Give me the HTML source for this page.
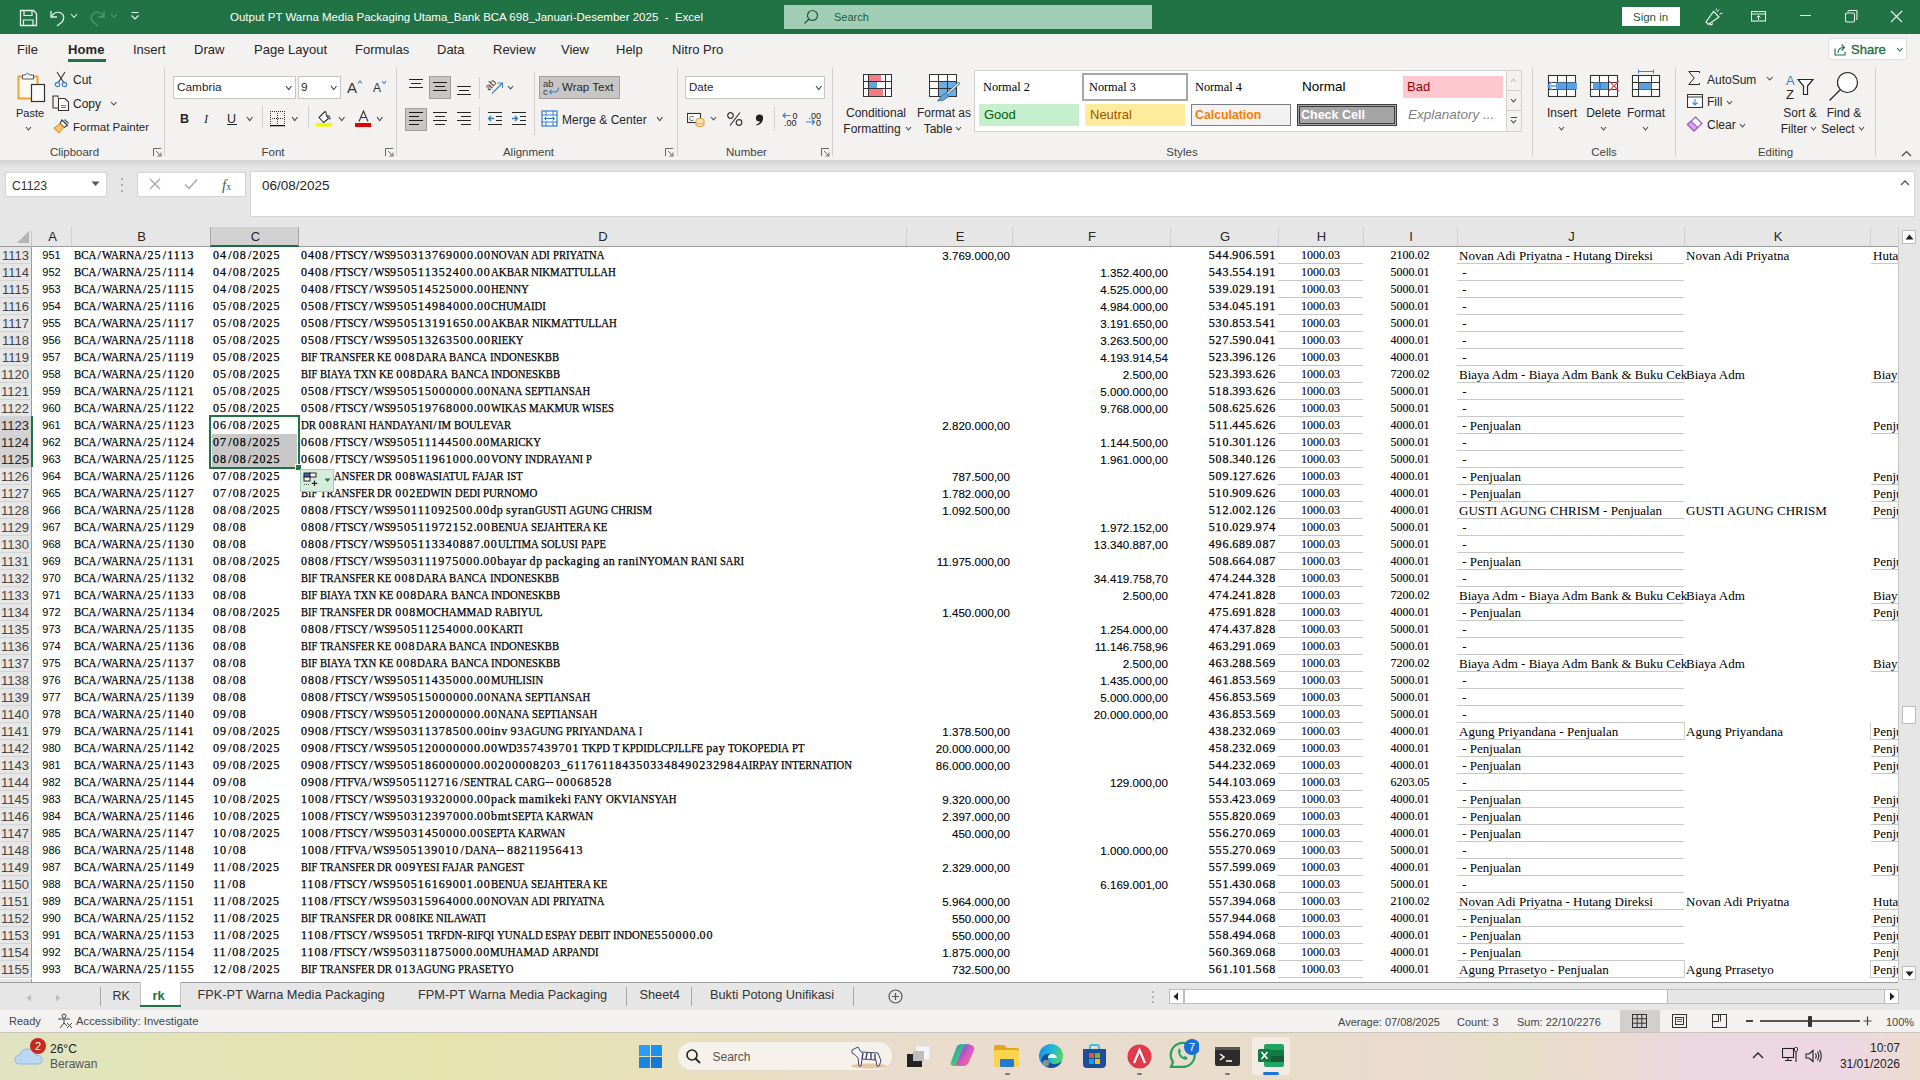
<!DOCTYPE html>
<html><head><meta charset="utf-8"><style>
*{box-sizing:border-box}
html,body{margin:0;padding:0}
body{width:1920px;height:1080px;overflow:hidden;position:relative;background:#fff;font-family:"Liberation Sans",sans-serif;color:#262626}
.a{position:absolute;white-space:nowrap}
#grid{position:absolute;left:0;top:247px;width:1898px;height:735px;background:#fff;overflow:hidden}
.ch{position:absolute;top:227px;height:19px;padding-left:1px;font-size:13px;line-height:20px;text-align:center;color:#262626;border-right:1px solid #d0d0d0}
.ch.sel{background:#d2d2d2;border-bottom:2px solid #1e6b3f;border-left:1px solid #a6a6a6;border-right:1px solid #a6a6a6;color:#262626;height:20px;padding-left:2px}
.rh{position:absolute;left:0;width:32px;height:17px;font-size:13px;line-height:17px;text-align:right;padding-right:2px;background:#e6e6e6;color:#444;border-bottom:1px solid #d4d4d4;border-right:1px solid #9b9b9b}
.rh.sel{background:#d2d2d2;color:#262626}
.c{position:absolute;height:17px;line-height:17px;white-space:nowrap;overflow:hidden;color:#000;font-size:12px}
.ca{left:32px;width:39px;text-align:center;font-family:"Liberation Sans";font-size:11px}
.cb{left:74px;width:136px;font-family:"Liberation Serif";font-size:12px}
.cc{left:213px;width:85px;font-family:"Liberation Serif";font-size:12px}
.cc.shade{background:#c8c8c8;left:212px;width:85px;padding-left:1px}
.cd{left:301px;width:605px;font-family:"Liberation Serif";font-size:12px}
.ce{left:906px;width:104px;text-align:right;font-family:"Liberation Sans";font-size:11.6px}
.cf{left:1012px;width:156px;text-align:right;font-family:"Liberation Sans";font-size:11.6px}
.cg{left:1170px;width:106px;text-align:right;font-family:"Liberation Serif";font-size:12px}
.chh{left:1278px;width:85px;text-align:center;font-family:"Liberation Serif";font-size:12px;border-bottom:1px solid #c8c8c8}
.ci{left:1363px;width:94px;text-align:center;font-family:"Liberation Serif";font-size:12px}
.cj{left:1459px;width:225px;overflow:visible;font-family:"Liberation Serif";font-size:13px}
.ck{left:1686px;width:184px;font-family:"Liberation Serif";font-size:13px}
.cl{left:1873px;width:25px;font-family:"Liberation Serif";font-size:13px}
i{font-style:normal}
.cb i.d,.cc i.d,.cd i.d{letter-spacing:1px}
.cg i.d{letter-spacing:0.8px}
.cb i.s,.cc i.s,.cd i.s{padding:0 1.2px}
.cb i.u,.cc i.u,.cd i.u{display:inline-block;transform-origin:0 0}
.cb i.l,.cc i.l,.cd i.l{letter-spacing:0.6px}
.cb i.p,.cc i.p,.cd i.p{letter-spacing:-0.3px}
.c{-webkit-text-stroke:0.25px #000}
.ca{-webkit-text-stroke:0}
.ce,.cf{-webkit-text-stroke:0.1px #000}
.cj,.ck,.cl{-webkit-text-stroke:0}
.chh,.ci{-webkit-text-stroke:0.1px #000}

</style></head><body>
<div class="a" style="left:0px;top:0px;width:1920px;height:34px;background:#217346"></div>
<svg class="a" style="left:19px;top:9px;" width="19" height="18" viewBox="0 0 19 18"><path d="M1.5 1.5 H14.5 L17.5 4.5 V16.5 H1.5 Z" fill="none" stroke="#e8f3ec" stroke-width="1.3"/><path d="M5 1.5 V6.5 H13 V1.5" fill="none" stroke="#e8f3ec" stroke-width="1.2"/><path d="M4.5 16.5 V11 H14 V16.5" fill="none" stroke="#e8f3ec" stroke-width="1.2"/></svg>
<svg class="a" style="left:49px;top:8px;" width="18" height="19" viewBox="0 0 18 19"><path d="M2 3 V9 H8" fill="none" stroke="#e8f3ec" stroke-width="1.3"/><path d="M2.5 8.5 C5 4.5 9 3.5 12 5 C15.5 7 15.5 11 13 14 L8 18" fill="none" stroke="#e8f3ec" stroke-width="1.3"/></svg>
<svg class="a" style="left:70px;top:13px;" width="8" height="5.5" viewBox="0 0 8 5.5"><path d="M1 1 L4.0 4.5 L7 1" fill="none" stroke="#e8f3ec" stroke-width="1.1"/></svg>
<svg class="a" style="left:88px;top:8px;" width="18" height="19" viewBox="0 0 18 19"><path d="M16 3 V9 H10" fill="none" stroke="#4f9a6e" stroke-width="1.3"/><path d="M15.5 8.5 C13 4.5 9 3.5 6 5 C2.5 7 2.5 11 5 14 L10 18" fill="none" stroke="#4f9a6e" stroke-width="1.3"/></svg>
<svg class="a" style="left:110px;top:13px;" width="8" height="5.5" viewBox="0 0 8 5.5"><path d="M1 1 L4.0 4.5 L7 1" fill="none" stroke="#4f9a6e" stroke-width="1.1"/></svg>
<svg class="a" style="left:130px;top:11px;" width="10" height="10" viewBox="0 0 10 10"><path d="M1.5 1.5 H8.5" stroke="#e8f3ec" stroke-width="1.1"/><path d="M1.5 4.5 L5 8 L8.5 4.5" fill="none" stroke="#e8f3ec" stroke-width="1.2"/></svg>
<div class="a" style="left:230px;top:12px;font:400 11.5px/11.5px 'Liberation Sans';color:#ffffff;">Output PT Warna Media Packaging Utama_Bank BCA 698_Januari-Desember 2025&nbsp; -&nbsp; Excel</div>
<div class="a" style="left:784px;top:5px;width:368px;height:24px;background:#a0cdb3"></div>
<svg class="a" style="left:803px;top:9px;" width="16" height="16" viewBox="0 0 16 16"><circle cx="9.5" cy="6.5" r="5" fill="none" stroke="#1f5d3b" stroke-width="1.2"/><path d="M6 10 L1.5 14.5" stroke="#1f5d3b" stroke-width="1.3"/></svg>
<div class="a" style="left:834px;top:12px;font:400 11px/11px 'Liberation Sans';color:#1f5d3b;">Search</div>
<div class="a" style="left:1622px;top:7px;width:58px;height:19px;background:#ffffff"></div>
<div class="a" style="left:1633px;top:12px;font:400 11.5px/11.5px 'Liberation Sans';color:#1f5d3b;">Sign in</div>
<svg class="a" style="left:1704px;top:8px;" width="20" height="18" viewBox="0 0 20 18"><path d="M2 14 L9.5 3.5 L15 9 L4.5 16.5 Z" fill="none" stroke="#e8f3ec" stroke-width="1.2"/><path d="M5 15 L7 17 L9 15.5" fill="none" stroke="#e8f3ec" stroke-width="1.1"/><path d="M13 4 L15 1.5 M15.5 6 L18.5 5 M12 2.5 L12.5 0.5" stroke="#e8f3ec" stroke-width="1"/></svg>
<svg class="a" style="left:1751px;top:11px;" width="16" height="11" viewBox="0 0 16 11"><rect x="0.5" y="0.5" width="14" height="9.5" fill="none" stroke="#e8f3ec" stroke-width="1.1"/><path d="M0.5 3 H14.5" stroke="#e8f3ec" stroke-width="1"/><path d="M7.5 9 V4.5 M5.5 6.5 L7.5 4.5 L9.5 6.5" fill="none" stroke="#e8f3ec" stroke-width="1"/></svg>
<div class="a" style="left:1800px;top:15px;width:11px;height:1px;background:#e8f3ec"></div>
<svg class="a" style="left:1845px;top:10px;" width="13" height="13" viewBox="0 0 13 13"><rect x="0.5" y="3" width="9" height="9" rx="1.5" fill="none" stroke="#e8f3ec" stroke-width="1.1"/><path d="M3 1.5 Q3 0.5 4 0.5 H11 Q12 0.5 12 1.5 V8.5 Q12 9.5 11 9.5" fill="none" stroke="#e8f3ec" stroke-width="1.1"/></svg>
<svg class="a" style="left:1890px;top:10px;" width="13" height="13" viewBox="0 0 13 13"><path d="M1 1 L12 12 M12 1 L1 12" stroke="#e8f3ec" stroke-width="1.2"/></svg>
<div class="a" style="left:0px;top:34px;width:1920px;height:32px;background:#f3f2f1"></div>
<div class="a" style="left:0px;top:34px;width:1920px;height:6px;background:linear-gradient(#ecefee,#f3f2f1)"></div>
<div class="a" style="left:17px;top:43px;font:400 13px/13px 'Liberation Sans';color:#262626;">File</div>
<div class="a" style="left:133px;top:43px;font:400 13px/13px 'Liberation Sans';color:#262626;">Insert</div>
<div class="a" style="left:194px;top:43px;font:400 13px/13px 'Liberation Sans';color:#262626;">Draw</div>
<div class="a" style="left:254px;top:43px;font:400 13px/13px 'Liberation Sans';color:#262626;">Page Layout</div>
<div class="a" style="left:355px;top:43px;font:400 13px/13px 'Liberation Sans';color:#262626;">Formulas</div>
<div class="a" style="left:437px;top:43px;font:400 13px/13px 'Liberation Sans';color:#262626;">Data</div>
<div class="a" style="left:493px;top:43px;font:400 13px/13px 'Liberation Sans';color:#262626;">Review</div>
<div class="a" style="left:561px;top:43px;font:400 13px/13px 'Liberation Sans';color:#262626;">View</div>
<div class="a" style="left:616px;top:43px;font:400 13px/13px 'Liberation Sans';color:#262626;">Help</div>
<div class="a" style="left:672px;top:43px;font:400 13px/13px 'Liberation Sans';color:#262626;">Nitro Pro</div>
<div class="a" style="left:68px;top:43px;font:700 13px/13px 'Liberation Sans';color:#262626;letter-spacing:0.1px">Home</div>
<div class="a" style="left:68px;top:59px;width:38px;height:3px;background:#217346"></div>
<div class="a" style="left:1828px;top:38px;width:79px;height:22px;background:#ffffff;border:1px solid #e1dfdd;border-radius:2px"></div>
<svg class="a" style="left:1834px;top:43px;" width="13" height="13" viewBox="0 0 13 13"><path d="M1 5.5 V12 H11 V9" fill="none" stroke="#1e6e42" stroke-width="1.1"/><path d="M4 10 C4 6 6.5 4.5 10 4.5 M7.5 1.5 L10.5 4.5 L7.5 7.5" fill="none" stroke="#1e6e42" stroke-width="1.1"/></svg>
<div class="a" style="left:1851px;top:43px;font:400 13px/13px 'Liberation Sans';color:#1e6e42;-webkit-text-stroke:0.35px #1e6e42">Share</div>
<svg class="a" style="left:1896px;top:47px;" width="7.5" height="5" viewBox="0 0 7.5 5"><path d="M1 1 L3.75 4 L6.5 1" fill="none" stroke="#1e6e42" stroke-width="1.1"/></svg>
<div class="a" style="left:0px;top:66px;width:1920px;height:94px;background:#f3f2f1"></div>
<div class="a" style="left:164px;top:68px;width:1px;height:88px;background:#d2d0ce"></div>
<div class="a" style="left:396px;top:68px;width:1px;height:88px;background:#d2d0ce"></div>
<div class="a" style="left:677px;top:68px;width:1px;height:88px;background:#d2d0ce"></div>
<div class="a" style="left:832px;top:68px;width:1px;height:88px;background:#d2d0ce"></div>
<div class="a" style="left:1532px;top:68px;width:1px;height:88px;background:#d2d0ce"></div>
<div class="a" style="left:1675px;top:68px;width:1px;height:88px;background:#d2d0ce"></div>
<div class="a" style="left:1875px;top:68px;width:1px;height:88px;background:#d2d0ce"></div>
<div class="a" style="left:-125.5px;width:400px;text-align:center;top:147px;font:400 11.5px/11.5px 'Liberation Sans';color:#444444;">Clipboard</div>
<div class="a" style="left:73px;width:400px;text-align:center;top:147px;font:400 11.5px/11.5px 'Liberation Sans';color:#444444;">Font</div>
<div class="a" style="left:328.5px;width:400px;text-align:center;top:147px;font:400 11.5px/11.5px 'Liberation Sans';color:#444444;">Alignment</div>
<div class="a" style="left:546.5px;width:400px;text-align:center;top:147px;font:400 11.5px/11.5px 'Liberation Sans';color:#444444;">Number</div>
<div class="a" style="left:982px;width:400px;text-align:center;top:147px;font:400 11.5px/11.5px 'Liberation Sans';color:#444444;">Styles</div>
<div class="a" style="left:1404px;width:400px;text-align:center;top:147px;font:400 11.5px/11.5px 'Liberation Sans';color:#444444;">Cells</div>
<div class="a" style="left:1575.5px;width:400px;text-align:center;top:147px;font:400 11.5px/11.5px 'Liberation Sans';color:#444444;">Editing</div>
<svg class="a" style="left:153px;top:148px;" width="9" height="9" viewBox="0 0 9 9"><path d="M0.5 8 V0.5 H8" fill="none" stroke="#666" stroke-width="1"/><path d="M3 3 L8 8 M4.5 8 H8 V4.5" fill="none" stroke="#666" stroke-width="1"/></svg>
<svg class="a" style="left:385px;top:148px;" width="9" height="9" viewBox="0 0 9 9"><path d="M0.5 8 V0.5 H8" fill="none" stroke="#666" stroke-width="1"/><path d="M3 3 L8 8 M4.5 8 H8 V4.5" fill="none" stroke="#666" stroke-width="1"/></svg>
<svg class="a" style="left:665px;top:148px;" width="9" height="9" viewBox="0 0 9 9"><path d="M0.5 8 V0.5 H8" fill="none" stroke="#666" stroke-width="1"/><path d="M3 3 L8 8 M4.5 8 H8 V4.5" fill="none" stroke="#666" stroke-width="1"/></svg>
<svg class="a" style="left:821px;top:148px;" width="9" height="9" viewBox="0 0 9 9"><path d="M0.5 8 V0.5 H8" fill="none" stroke="#666" stroke-width="1"/><path d="M3 3 L8 8 M4.5 8 H8 V4.5" fill="none" stroke="#666" stroke-width="1"/></svg>
<svg class="a" style="left:15px;top:70px;" width="33" height="34" viewBox="0 0 33 34"><rect x="3.5" y="6.5" width="19" height="22" fill="#fff8ee" stroke="#e8a33d" stroke-width="2"/><path d="M7.5 9 V5 H10.5 Q12.5 1.5 14.5 5 H18.5 V9 Z" fill="#fff" stroke="#555" stroke-width="1"/><rect x="16.5" y="14.5" width="13" height="17" fill="#fafafa" stroke="#333" stroke-width="1.2"/></svg>
<div class="a" style="left:16px;top:108px;font:400 11px/11px 'Liberation Sans';color:#262626;">Paste</div>
<svg class="a" style="left:25px;top:126px;" width="7" height="5" viewBox="0 0 7 5"><path d="M1 1 L3.5 4 L6 1" fill="none" stroke="#444" stroke-width="1.1"/></svg>
<svg class="a" style="left:54px;top:71px;" width="14" height="17" viewBox="0 0 14 17"><path d="M3 1 L10 12 M11 1 L4 12" stroke="#333" stroke-width="1.1"/><circle cx="3.5" cy="13.5" r="2.2" fill="none" stroke="#3a86c8" stroke-width="1.2"/><circle cx="10.5" cy="13.5" r="2.2" fill="none" stroke="#3a86c8" stroke-width="1.2"/></svg>
<div class="a" style="left:73px;top:74px;font:400 12px/12px 'Liberation Sans';color:#262626;">Cut</div>
<svg class="a" style="left:52px;top:95px;" width="18" height="17" viewBox="0 0 18 17"><path d="M6 2.5 V1 H1 V13 H6" fill="none" stroke="#333" stroke-width="1.1"/><path d="M6.5 3.5 H13 L16.5 7 V15.5 H6.5 Z" fill="#fff" stroke="#333" stroke-width="1.1"/><path d="M9 10.5 H14 M9 12.5 H14" stroke="#555" stroke-width="0.8"/></svg>
<div class="a" style="left:73px;top:98px;font:400 12px/12px 'Liberation Sans';color:#262626;">Copy</div>
<svg class="a" style="left:110px;top:101px;" width="7.5" height="5" viewBox="0 0 7.5 5"><path d="M1 1 L3.75 4 L6.5 1" fill="none" stroke="#444" stroke-width="1.1"/></svg>
<svg class="a" style="left:53px;top:118px;" width="17" height="17" viewBox="0 0 17 17"><path d="M9 2 L14.5 7.5 L11 9.5 L7 5.5 Z" fill="#fff" stroke="#333" stroke-width="1.1"/><path d="M11.5 1.5 L15.5 5.5" stroke="#3a6ea0" stroke-width="1.5"/><path d="M7 6 L10.5 9.5 L6 15 L1 10 Z" fill="#f7c37a" stroke="#e69a2e" stroke-width="1.1"/></svg>
<div class="a" style="left:73px;top:122px;font:400 11.5px/11.5px 'Liberation Sans';color:#262626;">Format Painter</div>
<div class="a" style="left:173px;top:76px;width:123px;height:23px;background:#fff;border:1px solid #c8c6c4"></div>
<div class="a" style="left:177px;top:82px;font:400 11.8px/11.8px 'Liberation Sans';color:#262626;">Cambria</div>
<svg class="a" style="left:285px;top:85px;" width="7.5" height="5.5" viewBox="0 0 7.5 5.5"><path d="M1 1 L3.75 4.5 L6.5 1" fill="none" stroke="#444" stroke-width="1.1"/></svg>
<div class="a" style="left:298px;top:76px;width:43px;height:23px;background:#fff;border:1px solid #c8c6c4"></div>
<div class="a" style="left:301px;top:82px;font:400 11.8px/11.8px 'Liberation Sans';color:#262626;">9</div>
<svg class="a" style="left:330px;top:85px;" width="7.5" height="5.5" viewBox="0 0 7.5 5.5"><path d="M1 1 L3.75 4.5 L6.5 1" fill="none" stroke="#444" stroke-width="1.1"/></svg>
<div class="a" style="left:347px;top:79.5px;font:400 15px/15px 'Liberation Sans';color:#333;">A</div>
<svg class="a" style="left:357px;top:79.5px;" width="6" height="4.5" viewBox="0 0 6 4.5"><path d="M1 3.5 L3.0 1 L5 3.5" fill="none" stroke="#3a86c8" stroke-width="1.1"/></svg>
<div class="a" style="left:373px;top:81.5px;font:400 12px/12px 'Liberation Sans';color:#333;">A</div>
<svg class="a" style="left:381px;top:79.5px;" width="6" height="4.5" viewBox="0 0 6 4.5"><path d="M1 1 L3.0 3.5 L5 1" fill="none" stroke="#3a86c8" stroke-width="1.1"/></svg>
<div class="a" style="left:180px;top:112.5px;font:700 12.5px/12.5px 'Liberation Sans';color:#262626;">B</div>
<div class="a" style="left:204px;top:112.5px;font:400 12.5px/12.5px 'Liberation Serif';color:#262626;font-style:italic">I</div>
<div class="a" style="left:227px;top:112.5px;font:400 12.5px/12.5px 'Liberation Sans';color:#262626;">U</div>
<div class="a" style="left:227px;top:124px;width:10px;height:1px;background:#262626"></div>
<svg class="a" style="left:246px;top:116px;" width="7.5" height="5.5" viewBox="0 0 7.5 5.5"><path d="M1 1 L3.75 4.5 L6.5 1" fill="none" stroke="#444" stroke-width="1.1"/></svg>
<div class="a" style="left:262px;top:106px;width:1px;height:22px;background:#d2d0ce"></div>
<svg class="a" style="left:270px;top:111px;" width="16" height="16" viewBox="0 0 16 16"><rect x="0" y="0" width="1" height="1" fill="#333"/><rect x="0" y="14" width="1" height="1" fill="#333"/><rect x="2" y="0" width="1" height="1" fill="#333"/><rect x="2" y="14" width="1" height="1" fill="#333"/><rect x="4" y="0" width="1" height="1" fill="#333"/><rect x="4" y="14" width="1" height="1" fill="#333"/><rect x="6" y="0" width="1" height="1" fill="#333"/><rect x="6" y="14" width="1" height="1" fill="#333"/><rect x="8" y="0" width="1" height="1" fill="#333"/><rect x="8" y="14" width="1" height="1" fill="#333"/><rect x="10" y="0" width="1" height="1" fill="#333"/><rect x="10" y="14" width="1" height="1" fill="#333"/><rect x="12" y="0" width="1" height="1" fill="#333"/><rect x="12" y="14" width="1" height="1" fill="#333"/><rect x="14" y="0" width="1" height="1" fill="#333"/><rect x="14" y="14" width="1" height="1" fill="#333"/><rect x="0" y="2" width="1" height="1" fill="#333"/><rect x="14" y="2" width="1" height="1" fill="#333"/><rect x="0" y="4" width="1" height="1" fill="#333"/><rect x="14" y="4" width="1" height="1" fill="#333"/><rect x="0" y="6" width="1" height="1" fill="#333"/><rect x="14" y="6" width="1" height="1" fill="#333"/><rect x="0" y="8" width="1" height="1" fill="#333"/><rect x="14" y="8" width="1" height="1" fill="#333"/><rect x="0" y="10" width="1" height="1" fill="#333"/><rect x="14" y="10" width="1" height="1" fill="#333"/><rect x="0" y="12" width="1" height="1" fill="#333"/><rect x="14" y="12" width="1" height="1" fill="#333"/><rect x="2" y="7" width="1" height="1" fill="#333"/><rect x="4" y="7" width="1" height="1" fill="#333"/><rect x="6" y="7" width="1" height="1" fill="#333"/><rect x="8" y="7" width="1" height="1" fill="#333"/><rect x="10" y="7" width="1" height="1" fill="#333"/><rect x="12" y="7" width="1" height="1" fill="#333"/><rect x="7" y="2" width="1" height="1" fill="#333"/><rect x="7" y="4" width="1" height="1" fill="#333"/><rect x="7" y="6" width="1" height="1" fill="#333"/><rect x="7" y="8" width="1" height="1" fill="#333"/><rect x="7" y="10" width="1" height="1" fill="#333"/><rect x="7" y="12" width="1" height="1" fill="#333"/><rect x="0" y="14" width="15" height="1.3" fill="#111"/></svg>
<svg class="a" style="left:291px;top:116px;" width="7.5" height="5.5" viewBox="0 0 7.5 5.5"><path d="M1 1 L3.75 4.5 L6.5 1" fill="none" stroke="#444" stroke-width="1.1"/></svg>
<div class="a" style="left:308px;top:106px;width:1px;height:22px;background:#d2d0ce"></div>
<svg class="a" style="left:315px;top:110px;" width="18" height="18" viewBox="0 0 18 18"><path d="M4 7.5 L9.5 2 Q10.5 1 11 2.5 L11.5 6 L13.5 8.5 L8.5 12.5 Z" fill="#fff" stroke="#333" stroke-width="1.1" stroke-linejoin="round"/><path d="M11.5 6 Q15 5 15 9.5" fill="none" stroke="#2a5f8f" stroke-width="1.4"/><rect x="1" y="13" width="16" height="3.6" fill="#f5f500"/></svg>
<svg class="a" style="left:338px;top:116px;" width="7.5" height="5.5" viewBox="0 0 7.5 5.5"><path d="M1 1 L3.75 4.5 L6.5 1" fill="none" stroke="#444" stroke-width="1.1"/></svg>
<svg class="a" style="left:358px;top:110px;" width="11" height="12" viewBox="0 0 11 12"><path d="M1 11.5 L5.5 1 L10 11.5 M2.8 7.5 H8.2" fill="none" stroke="#333" stroke-width="1.1"/></svg>
<div class="a" style="left:355px;top:123px;width:16px;height:4px;background:#e00000"></div>
<svg class="a" style="left:376px;top:116px;" width="7.5" height="5.5" viewBox="0 0 7.5 5.5"><path d="M1 1 L3.75 4.5 L6.5 1" fill="none" stroke="#444" stroke-width="1.1"/></svg>
<div class="a" style="left:409px;top:79px;width:14px;height:1px;background:#262626"></div><div class="a" style="left:411px;top:83px;width:10px;height:1px;background:#262626"></div><div class="a" style="left:409px;top:87px;width:14px;height:1px;background:#262626"></div>
<div class="a" style="left:429px;top:76px;width:22px;height:23px;background:#c8c6c4;border:1px solid #a19f9d"></div>
<div class="a" style="left:433px;top:82px;width:14px;height:1px;background:#1a1a1a"></div><div class="a" style="left:435px;top:86px;width:10px;height:1px;background:#1a1a1a"></div><div class="a" style="left:433px;top:90px;width:14px;height:1px;background:#1a1a1a"></div>
<div class="a" style="left:457px;top:86px;width:14px;height:1px;background:#262626"></div><div class="a" style="left:459px;top:90px;width:10px;height:1px;background:#262626"></div><div class="a" style="left:457px;top:94px;width:14px;height:1px;background:#262626"></div>
<div class="a" style="left:479px;top:77px;width:1px;height:22px;background:#d2d0ce"></div>
<svg class="a" style="left:485px;top:77px;" width="20" height="18" viewBox="0 0 20 18"><text x="0" y="0" font-family="Liberation Sans" font-size="10" fill="#333" transform="translate(4 14) rotate(-45)">ab</text><path d="M7 16.5 L17.5 6 M12.5 6 H17.5 V11" fill="none" stroke="#3a86c8" stroke-width="1.1"/></svg>
<svg class="a" style="left:507px;top:85px;" width="7" height="5" viewBox="0 0 7 5"><path d="M1 1 L3.5 4 L6 1" fill="none" stroke="#444" stroke-width="1.1"/></svg>
<div class="a" style="left:534px;top:72px;width:1px;height:63px;background:#d2d0ce"></div>
<div class="a" style="left:539px;top:76px;width:81px;height:23px;background:#c8c6c4;border:1px solid #a19f9d"></div>
<svg class="a" style="left:543px;top:79px;" width="17" height="17" viewBox="0 0 17 17"><text x="0" y="8" font-family="Liberation Sans" font-size="9.5" fill="#333">ab</text><text x="0" y="16" font-family="Liberation Sans" font-size="9.5" fill="#333">c</text><path d="M15.5 8.5 Q15.5 13 11 13 H6.5 M8.5 11 L6.5 13 L8.5 15" fill="none" stroke="#3a86c8" stroke-width="1.2"/></svg>
<div class="a" style="left:562px;top:82px;font:400 11.5px/11.5px 'Liberation Sans';color:#262626;">Wrap Text</div>
<div class="a" style="left:405px;top:108px;width:22px;height:23px;background:#c8c6c4;border:1px solid #a19f9d"></div>
<div class="a" style="left:409px;top:112px;width:14px;height:1px;background:#1a1a1a"></div><div class="a" style="left:409px;top:116px;width:10px;height:1px;background:#1a1a1a"></div><div class="a" style="left:409px;top:120px;width:14px;height:1px;background:#1a1a1a"></div><div class="a" style="left:409px;top:124px;width:10px;height:1px;background:#1a1a1a"></div>
<div class="a" style="left:433px;top:112px;width:14px;height:1px;background:#262626"></div><div class="a" style="left:435px;top:116px;width:10px;height:1px;background:#262626"></div><div class="a" style="left:433px;top:120px;width:14px;height:1px;background:#262626"></div><div class="a" style="left:435px;top:124px;width:10px;height:1px;background:#262626"></div>
<div class="a" style="left:457px;top:112px;width:14px;height:1px;background:#262626"></div><div class="a" style="left:461px;top:116px;width:10px;height:1px;background:#262626"></div><div class="a" style="left:457px;top:120px;width:14px;height:1px;background:#262626"></div><div class="a" style="left:461px;top:124px;width:10px;height:1px;background:#262626"></div>
<div class="a" style="left:479px;top:107px;width:1px;height:24px;background:#d2d0ce"></div>
<div class="a" style="left:488px;top:112px;width:14px;height:1px;background:#262626"></div><div class="a" style="left:496px;top:116px;width:6px;height:1px;background:#262626"></div><div class="a" style="left:496px;top:120px;width:6px;height:1px;background:#262626"></div><div class="a" style="left:488px;top:124px;width:14px;height:1px;background:#262626"></div>
<svg class="a" style="left:487px;top:115px;" width="8" height="7" viewBox="0 0 8 7"><path d="M7 3.5 H1.5 M4 1 L1.5 3.5 L4 6" fill="none" stroke="#2f7fb8" stroke-width="1.3"/></svg>
<div class="a" style="left:512px;top:112px;width:14px;height:1px;background:#262626"></div><div class="a" style="left:520px;top:116px;width:6px;height:1px;background:#262626"></div><div class="a" style="left:520px;top:120px;width:6px;height:1px;background:#262626"></div><div class="a" style="left:512px;top:124px;width:14px;height:1px;background:#262626"></div>
<svg class="a" style="left:511px;top:115px;" width="8" height="7" viewBox="0 0 8 7"><path d="M1 3.5 H6.5 M4 1 L6.5 3.5 L4 6" fill="none" stroke="#2f7fb8" stroke-width="1.3"/></svg>
<svg class="a" style="left:541px;top:110px;" width="17" height="17" viewBox="0 0 17 17"><rect x="1" y="1" width="15" height="15" fill="#fff" stroke="#2e7bc4" stroke-width="1.2"/><path d="M1 5 H16 M1 12 H16 M5 1 V5 M12 1 V5 M5 12 V16 M12 12 V16" stroke="#2e7bc4" stroke-width="1"/><path d="M3.5 8.5 H13.5 M5.5 6.5 L3.5 8.5 L5.5 10.5 M11.5 6.5 L13.5 8.5 L11.5 10.5" fill="none" stroke="#2e7bc4" stroke-width="1"/></svg>
<div class="a" style="left:562px;top:114px;font:400 12px/12px 'Liberation Sans';color:#262626;">Merge &amp; Center</div>
<svg class="a" style="left:656px;top:116px;" width="7.5" height="5.5" viewBox="0 0 7.5 5.5"><path d="M1 1 L3.75 4.5 L6.5 1" fill="none" stroke="#444" stroke-width="1.1"/></svg>
<div class="a" style="left:685px;top:76px;width:140px;height:23px;background:#fff;border:1px solid #c8c6c4"></div>
<div class="a" style="left:689px;top:82px;font:400 11.5px/11.5px 'Liberation Sans';color:#262626;">Date</div>
<svg class="a" style="left:815px;top:85px;" width="7.5" height="5.5" viewBox="0 0 7.5 5.5"><path d="M1 1 L3.75 4.5 L6.5 1" fill="none" stroke="#444" stroke-width="1.1"/></svg>
<svg class="a" style="left:687px;top:112px;" width="19" height="16" viewBox="0 0 19 16"><rect x="0.5" y="1.5" width="13" height="9" fill="#fff" stroke="#333" stroke-width="1.1"/><text x="2" y="9" font-family="Liberation Sans" font-size="7" fill="#333">C</text><ellipse cx="13" cy="8" rx="4" ry="1.6" fill="#fbe3b8" stroke="#e69a2e"/><path d="M9 8 V13.5 Q13 16 17 13.5 V8" fill="#fbe3b8" stroke="#e69a2e"/><path d="M9 11 Q13 13 17 11" fill="none" stroke="#e69a2e" stroke-width="0.8"/></svg>
<svg class="a" style="left:710px;top:116px;" width="7" height="5" viewBox="0 0 7 5"><path d="M1 1 L3.5 4 L6 1" fill="none" stroke="#444" stroke-width="1.1"/></svg>
<svg class="a" style="left:727px;top:112px;" width="16" height="14" viewBox="0 0 16 14"><circle cx="3.5" cy="3.5" r="2.8" fill="none" stroke="#333" stroke-width="1.2"/><circle cx="12" cy="10.5" r="2.8" fill="none" stroke="#333" stroke-width="1.2"/><path d="M13 0.5 L3 13.5" stroke="#333" stroke-width="1.2"/></svg>
<svg class="a" style="left:755px;top:114px;" width="9" height="12" viewBox="0 0 9 12"><circle cx="4.5" cy="4" r="3.6" fill="#222"/><path d="M7.8 4.5 Q8 10 1.5 11.5 L1.2 10.5 Q5 9 5.5 6 Z" fill="#222"/></svg>
<div class="a" style="left:774px;top:107px;width:1px;height:24px;background:#d2d0ce"></div>
<svg class="a" style="left:782px;top:111px;" width="17" height="16" viewBox="0 0 17 16"><path d="M8.5 4.5 H1 M3.5 2 L1 4.5 L3.5 7" fill="none" stroke="#3a86c8" stroke-width="1.2"/><text x="10.5" y="7.5" font-family="Liberation Sans" font-size="9" fill="#222">0</text><text x="2" y="15" font-family="Liberation Sans" font-size="9" fill="#222">.00</text></svg>
<svg class="a" style="left:805px;top:111px;" width="17" height="16" viewBox="0 0 17 16"><text x="3.5" y="7.5" font-family="Liberation Sans" font-size="9" fill="#222">.00</text><path d="M1 11 H9.5 M7 8.5 L9.5 11 L7 13.5" fill="none" stroke="#3a86c8" stroke-width="1.2"/><text x="11" y="15" font-family="Liberation Sans" font-size="9" fill="#222">0</text></svg>
<svg class="a" style="left:863px;top:74px;" width="30" height="24" viewBox="0 0 30 24"><rect x="0.5" y="0.5" width="28" height="22" fill="#fff"/><rect x="6" y="1" width="12" height="6" fill="#f47a84"/><rect x="6" y="8" width="8" height="6" fill="#5ea5dc"/><rect x="6" y="15" width="14" height="7" fill="#f47a84"/><rect x="0.5" y="0.5" width="28" height="22" fill="none" stroke="#333" stroke-width="1"/><path d="M5.5 0.5 V22.5 M22.5 0.5 V22.5 M0.5 7.5 H28.5 M0.5 14.5 H28.5" stroke="#333" stroke-width="1"/></svg>
<div class="a" style="left:676px;width:400px;text-align:center;top:107px;font:400 12px/12px 'Liberation Sans';color:#262626;">Conditional</div>
<div class="a" style="left:672px;width:400px;text-align:center;top:123px;font:400 12px/12px 'Liberation Sans';color:#262626;">Formatting</div>
<svg class="a" style="left:905px;top:126px;" width="7" height="5" viewBox="0 0 7 5"><path d="M1 1 L3.5 4 L6 1" fill="none" stroke="#444" stroke-width="1.1"/></svg>
<svg class="a" style="left:929px;top:74px;" width="32" height="29" viewBox="0 0 32 29"><rect x="0.5" y="0.5" width="27" height="22" fill="#fff"/><rect x="9.5" y="7.5" width="18" height="15" fill="#6aaee8"/><rect x="0.5" y="0.5" width="27" height="22" fill="none" stroke="#333" stroke-width="1"/><path d="M9.5 0.5 V22.5 M18.5 0.5 V22.5 M0.5 7.5 H27.5 M0.5 14.5 H27.5" stroke="#333" stroke-width="1"/><path d="M29.5 9.5 L17 21" stroke="#3a6ea0" stroke-width="3" stroke-linecap="round"/><path d="M29.5 9.5 L17 21" stroke="#fbe8c8" stroke-width="1.4" stroke-linecap="round"/><path d="M17.5 19 Q12 21 8.5 27 Q15 27.5 19.5 22.5 Z" fill="#5ea5dc" stroke="#3a6ea0" stroke-width="0.8"/></svg>
<div class="a" style="left:744px;width:400px;text-align:center;top:107px;font:400 12px/12px 'Liberation Sans';color:#262626;">Format as</div>
<div class="a" style="left:738px;width:400px;text-align:center;top:123px;font:400 12px/12px 'Liberation Sans';color:#262626;">Table</div>
<svg class="a" style="left:955px;top:126px;" width="7" height="5" viewBox="0 0 7 5"><path d="M1 1 L3.5 4 L6 1" fill="none" stroke="#444" stroke-width="1.1"/></svg>
<div class="a" style="left:974px;top:70px;width:533px;height:62px;background:#fff;border:1px solid #d2d0ce"></div>
<div class="a" style="left:983px;top:81px;font:400 12.3px/12.3px 'Liberation Serif';color:#000;">Normal 2</div>
<div class="a" style="left:1082px;top:73px;width:106px;height:28px;border:2px solid #a6a6a6;background:#fff"></div>
<div class="a" style="left:1089px;top:81px;font:400 12.3px/12.3px 'Liberation Serif';color:#000;">Normal 3</div>
<div class="a" style="left:1195px;top:81px;font:400 12.3px/12.3px 'Liberation Serif';color:#000;">Normal 4</div>
<div class="a" style="left:1302px;top:80px;font:400 13.5px/13.5px 'Liberation Sans';color:#000;">Normal</div>
<div class="a" style="left:1403px;top:76px;width:100px;height:22px;background:#ffc7ce"></div>
<div class="a" style="left:1407px;top:80px;font:400 13px/13px 'Liberation Sans';color:#9c0006;">Bad</div>
<div class="a" style="left:979px;top:104px;width:100px;height:22px;background:#c6efce"></div>
<div class="a" style="left:984px;top:108px;font:400 13px/13px 'Liberation Sans';color:#006100;">Good</div>
<div class="a" style="left:1085px;top:104px;width:100px;height:22px;background:#ffeb9c"></div>
<div class="a" style="left:1090px;top:108px;font:400 13px/13px 'Liberation Sans';color:#9c5700;">Neutral</div>
<div class="a" style="left:1191px;top:104px;width:100px;height:22px;background:#f2f2f2;border:1px solid #7f7f7f"></div>
<div class="a" style="left:1195px;top:109px;font:700 12.3px/12.3px 'Liberation Sans';color:#fa7d00;">Calculation</div>
<div class="a" style="left:1297px;top:104px;width:100px;height:22px;background:#a5a5a5;border:3px double #3f3f3f"></div>
<div class="a" style="left:1301px;top:109px;font:700 12.5px/12.5px 'Liberation Sans';color:#ffffff;">Check Cell</div>
<div class="a" style="left:1408px;top:108px;font:400 13.5px/13.5px 'Liberation Sans';color:#7f7f7f;font-style:italic">Explanatory ...</div>
<div class="a" style="left:1506px;top:70px;width:16px;height:62px;background:#f3f2f1;border:1px solid #d2d0ce"></div>
<div class="a" style="left:1506px;top:90px;width:16px;height:1px;background:#d2d0ce"></div>
<div class="a" style="left:1506px;top:110px;width:16px;height:1px;background:#d2d0ce"></div>
<svg class="a" style="left:1510px;top:78px;" width="7" height="5" viewBox="0 0 7 5"><path d="M1 4 L3.5 1 L6 4" fill="none" stroke="#bbb" stroke-width="1.1"/></svg>
<svg class="a" style="left:1510px;top:98px;" width="7" height="5" viewBox="0 0 7 5"><path d="M1 1 L3.5 4 L6 1" fill="none" stroke="#444" stroke-width="1.1"/></svg>
<div class="a" style="left:1511px;top:117px;width:6px;height:1px;background:#444"></div>
<svg class="a" style="left:1510px;top:119px;" width="7" height="5" viewBox="0 0 7 5"><path d="M1 1 L3.5 4 L6 1" fill="none" stroke="#444" stroke-width="1.1"/></svg>
<svg class="a" style="left:1546px;top:74px;" width="32" height="24" viewBox="0 0 32 24"><rect x="2.5" y="1.5" width="27" height="21" fill="#fff" stroke="#333" stroke-width="1.1"/><path d="M11.5 1.5 V22.5 M20.5 1.5 V22.5 M2.5 8.5 H29.5 M2.5 15.5 H29.5" stroke="#333" stroke-width="1"/><rect x="10" y="8.5" width="21" height="7" fill="#5ba0e0"/><path d="M20.5 8.5 V15.5" stroke="#1f5a96"/><path d="M13 12 H2 M6 8 L2 12 L6 16" fill="none" stroke="#5ba0e0" stroke-width="1.6"/></svg>
<div class="a" style="left:1362px;width:400px;text-align:center;top:107px;font:400 12px/12px 'Liberation Sans';color:#262626;">Insert</div>
<svg class="a" style="left:1558px;top:126px;" width="7" height="5" viewBox="0 0 7 5"><path d="M1 1 L3.5 4 L6 1" fill="none" stroke="#444" stroke-width="1.1"/></svg>
<svg class="a" style="left:1589px;top:74px;" width="32" height="24" viewBox="0 0 32 24"><rect x="1.5" y="1.5" width="27" height="21" fill="#fff" stroke="#333" stroke-width="1.1"/><path d="M10.5 1.5 V22.5 M19.5 1.5 V22.5 M1.5 8.5 H28.5 M1.5 15.5 H28.5" stroke="#333" stroke-width="1"/><rect x="4" y="8.5" width="15" height="7" fill="#5ba0e0"/><path d="M11 8.5 V15.5" stroke="#1f5a96"/><path d="M20 7 L30 17 M30 7 L20 17" stroke="#e0505a" stroke-width="1.2"/></svg>
<div class="a" style="left:1403.5px;width:400px;text-align:center;top:107px;font:400 12px/12px 'Liberation Sans';color:#262626;">Delete</div>
<svg class="a" style="left:1600px;top:126px;" width="7" height="5" viewBox="0 0 7 5"><path d="M1 1 L3.5 4 L6 1" fill="none" stroke="#444" stroke-width="1.1"/></svg>
<svg class="a" style="left:1631px;top:69px;" width="30" height="30" viewBox="0 0 30 30"><path d="M7.5 2.5 H22.5 M7.5 0.5 V4.5 M22.5 0.5 V4.5" stroke="#3a86c8" stroke-width="1"/><rect x="1.5" y="6.5" width="27" height="21" fill="#fff" stroke="#333" stroke-width="1.1"/><path d="M7.5 6.5 V27.5 M20.5 6.5 V27.5 M1.5 13.5 H28.5 M1.5 20.5 H28.5" stroke="#333" stroke-width="1"/><rect x="8" y="14" width="12.5" height="6.5" fill="#5ba0e0"/></svg>
<div class="a" style="left:1446px;width:400px;text-align:center;top:107px;font:400 12px/12px 'Liberation Sans';color:#262626;">Format</div>
<svg class="a" style="left:1642px;top:126px;" width="7" height="5" viewBox="0 0 7 5"><path d="M1 1 L3.5 4 L6 1" fill="none" stroke="#444" stroke-width="1.1"/></svg>
<svg class="a" style="left:1687px;top:70px;" width="14" height="16" viewBox="0 0 14 16"><path d="M12.5 3 V1.5 H1.8 L7.2 8 L1.8 14.5 H12.5 V13" fill="none" stroke="#262626" stroke-width="1"/></svg>
<div class="a" style="left:1707px;top:73.5px;font:400 12px/12px 'Liberation Sans';color:#262626;">AutoSum</div>
<svg class="a" style="left:1766px;top:76px;" width="7.5" height="5" viewBox="0 0 7.5 5"><path d="M1 1 L3.75 4 L6.5 1" fill="none" stroke="#444" stroke-width="1.1"/></svg>
<svg class="a" style="left:1687px;top:94px;" width="16" height="14" viewBox="0 0 16 14"><rect x="0.5" y="0.5" width="15" height="13" fill="#fff" stroke="#333" stroke-width="1.1"/><path d="M0.5 3 H15.5" stroke="#333"/><path d="M8 5 V11 M5.5 8.5 L8 11 L10.5 8.5" fill="none" stroke="#3a86c8" stroke-width="1.1"/></svg>
<div class="a" style="left:1707px;top:96px;font:400 12px/12px 'Liberation Sans';color:#262626;">Fill</div>
<svg class="a" style="left:1726px;top:100px;" width="7" height="5" viewBox="0 0 7 5"><path d="M1 1 L3.5 4 L6 1" fill="none" stroke="#444" stroke-width="1.1"/></svg>
<svg class="a" style="left:1686px;top:116px;" width="17" height="16" viewBox="0 0 17 16"><path d="M9.5 1 L16 7.5 L8 15 L1.5 8.5 Z" fill="#fff" stroke="#a35bc2" stroke-width="1.2"/><path d="M1.5 8.5 L5 5 L11.5 11.5 L8 15 Z" fill="#d7a6ea" stroke="#a35bc2" stroke-width="1.2"/></svg>
<div class="a" style="left:1707px;top:119px;font:400 12px/12px 'Liberation Sans';color:#262626;">Clear</div>
<svg class="a" style="left:1739px;top:123px;" width="7" height="5" viewBox="0 0 7 5"><path d="M1 1 L3.5 4 L6 1" fill="none" stroke="#444" stroke-width="1.1"/></svg>
<div class="a" style="left:1786px;top:73.5px;font:400 13px/13px 'Liberation Sans';color:#3a86c8;">A</div>
<div class="a" style="left:1786px;top:88px;font:400 13px/13px 'Liberation Sans';color:#262626;">Z</div>
<svg class="a" style="left:1797px;top:78px;" width="18" height="18" viewBox="0 0 18 18"><path d="M1 1.5 H16 L10.5 8 V16.5 H6.5 V8 Z" fill="#fff" stroke="#262626" stroke-width="1.2"/></svg>
<div class="a" style="left:1600px;width:400px;text-align:center;top:107px;font:400 12px/12px 'Liberation Sans';color:#262626;">Sort &amp;</div>
<div class="a" style="left:1594px;width:400px;text-align:center;top:123px;font:400 12px/12px 'Liberation Sans';color:#262626;">Filter</div>
<svg class="a" style="left:1810px;top:126px;" width="7" height="5" viewBox="0 0 7 5"><path d="M1 1 L3.5 4 L6 1" fill="none" stroke="#444" stroke-width="1.1"/></svg>
<svg class="a" style="left:1828px;top:71px;" width="33" height="31" viewBox="0 0 33 31"><circle cx="19.5" cy="11.5" r="10" fill="#fff" stroke="#262626" stroke-width="1.2"/><path d="M12.5 18.5 L1.5 29.5" stroke="#262626" stroke-width="1.2"/></svg>
<div class="a" style="left:1644px;width:400px;text-align:center;top:107px;font:400 12px/12px 'Liberation Sans';color:#262626;">Find &amp;</div>
<div class="a" style="left:1638px;width:400px;text-align:center;top:123px;font:400 12px/12px 'Liberation Sans';color:#262626;">Select</div>
<svg class="a" style="left:1858px;top:126px;" width="7" height="5" viewBox="0 0 7 5"><path d="M1 1 L3.5 4 L6 1" fill="none" stroke="#444" stroke-width="1.1"/></svg>
<svg class="a" style="left:1901px;top:150px;" width="11" height="7" viewBox="0 0 11 7"><path d="M1 6 L5.5 1.5 L10 6" fill="none" stroke="#444" stroke-width="1.2"/></svg>
<div class="a" style="left:0px;top:160px;width:1920px;height:67px;background:#e6e6e6"></div>
<div class="a" style="left:0px;top:160px;width:1920px;height:8px;background:linear-gradient(#d2d2d2,#e6e6e6)"></div>
<div class="a" style="left:5px;top:172px;width:102px;height:25px;background:#fff;border:1px solid #d4d4d4"></div>
<div class="a" style="left:12px;top:180px;font:400 12.2px/12.2px 'Liberation Sans';color:#333;">C1123</div>
<svg class="a" style="left:91px;top:181px;" width="9" height="6" viewBox="0 0 9 6"><path d="M0.5 0.5 H8.5 L4.5 5 Z" fill="#555"/></svg>
<svg class="a" style="left:120px;top:176px;" width="4" height="18" viewBox="0 0 4 18"><circle cx="2" cy="3" r="1" fill="#999"/><circle cx="2" cy="9" r="1" fill="#999"/><circle cx="2" cy="15" r="1" fill="#999"/></svg>
<div class="a" style="left:137px;top:172px;width:109px;height:25px;background:#fff;border:1px solid #d4d4d4"></div>
<svg class="a" style="left:149px;top:178px;" width="12" height="12" viewBox="0 0 12 12"><path d="M1 1 L11 11 M11 1 L1 11" stroke="#a8a8a8" stroke-width="1.3"/></svg>
<svg class="a" style="left:184px;top:178px;" width="14" height="12" viewBox="0 0 14 12"><path d="M1 6.5 L5 10.5 L13 1.5" fill="none" stroke="#a8a8a8" stroke-width="1.5"/></svg>
<div class="a" style="left:222px;top:178px;font:400 15px/15px 'Liberation Serif';color:#555;"><i style="font-style:italic">f</i><span style="font-size:10px">x</span></div>
<div class="a" style="left:250px;top:171px;width:1665px;height:46px;background:#fff;border:1px solid #d4d4d4"></div>
<div class="a" style="left:262px;top:179px;font:400 13.5px/13.5px 'Liberation Sans';color:#262626;">06/08/2025</div>
<svg class="a" style="left:1900px;top:179px;" width="10" height="7" viewBox="0 0 10 7"><path d="M1 6 L5 2 L9 6" fill="none" stroke="#555" stroke-width="1.4"/></svg>
<div class="a" style="left:0px;top:227px;width:1898px;height:20px;background:#e6e6e6"></div>
<div class="a" style="left:0px;top:246px;width:1898px;height:1px;background:#9b9b9b"></div>
<svg class="a" style="left:17px;top:231px;" width="13" height="12" viewBox="0 0 13 12"><path d="M12 0 V12 H0 Z" fill="#b4b4b4"/></svg>
<div class="a" style="left:31px;top:231px;width:1px;height:16px;background:#c6c6c6"></div>
<div class="a" style="left:1898px;top:227px;width:22px;height:755px;background:#e6e6e6"></div>
<div class="a" style="left:1898px;top:247px;width:1px;height:735px;background:#c6c6c6"></div>
<div class="a" style="left:1902px;top:230px;width:14px;height:14px;background:#fff;border:1px solid #bdbdbd"></div>
<svg class="a" style="left:1905px;top:234px;" width="9" height="6" viewBox="0 0 9 6"><path d="M0.5 5.5 H8.5 L4.5 0.5 Z" fill="#222"/></svg>
<div class="a" style="left:1902px;top:706px;width:14px;height:18px;background:#fff;border:1px solid #bdbdbd"></div>
<div class="a" style="left:1902px;top:966px;width:14px;height:14px;background:#fff;border:1px solid #bdbdbd"></div>
<svg class="a" style="left:1905px;top:971px;" width="9" height="6" viewBox="0 0 9 6"><path d="M0.5 0.5 H8.5 L4.5 5.5 Z" fill="#222"/></svg>
<div id="grid"></div>
<div class="ch" style="left:33px;width:39px">A</div>
<div class="ch" style="left:72px;width:139px">B</div>
<div class="ch sel" style="left:210px;width:89px">C</div>
<div class="ch" style="left:299px;width:608px">D</div>
<div class="ch" style="left:907px;width:106px">E</div>
<div class="ch" style="left:1013px;width:158px">F</div>
<div class="ch" style="left:1171px;width:108px">G</div>
<div class="ch" style="left:1279px;width:85px">H</div>
<div class="ch" style="left:1364px;width:94px">I</div>
<div class="ch" style="left:1458px;width:227px">J</div>
<div class="ch" style="left:1685px;width:186px">K</div>
<div class="ch" style="left:1871px;width:28px"></div>
<div class="rh" style="top:247px">1113</div>
<div class="c ca" style="top:247px">951</div>
<div class="c cb" style="top:247px"><i class="u" style="transform:scaleX(0.900);margin-right:-2.46px">BCA</i><i class="s">/</i><i class="u" style="transform:scaleX(0.907);margin-right:-4.10px">WARNA</i><i class="s">/</i><i class="d">25</i><i class="s">/</i><i class="d">1113</i></div>
<div class="c cc" style="top:247px"><i class="d">04</i><i class="s">/</i><i class="d">08</i><i class="s">/</i><i class="d">2025</i></div>
<div class="c cd" style="top:247px"><i class="d">0408</i><i class="s">/</i><i class="u" style="transform:scaleX(0.890);margin-right:-4.10px">FTSCY</i><i class="s">/</i><i class="u" style="transform:scaleX(0.909);margin-right:-1.64px">WS</i><i class="d">950313769000</i>.<i class="d">00</i><i class="u" style="transform:scaleX(0.902);margin-right:-4.10px">NOVAN</i><i class="p"> </i><i class="u" style="transform:scaleX(0.885);margin-right:-2.46px">ADI</i><i class="p"> </i><i class="u" style="transform:scaleX(0.887);margin-right:-6.56px">PRIYATNA</i></div>
<div class="c ce" style="top:247px">3.769.000,00</div>
<div class="c cg" style="top:247px"><i class="d">544</i>.<i class="d">906</i>.<i class="d">591</i></div>
<div class="c chh" style="top:247px">1000.03</div>
<div class="c ci" style="top:247px">2100.02</div>
<div class="c cj" style="top:247px">Novan Adi Priyatna - Hutang Direksi</div>
<div class="a" style="left:1457px;top:263px;width:227px;height:1px;background:#c8c8c8"></div>
<div class="c ck" style="top:247px">Novan Adi Priyatna</div>
<div class="c cl" style="top:247px">Hutang</div>
<div class="a" style="left:1871px;top:263px;width:27px;height:1px;background:#c8c8c8"></div>
<div class="rh" style="top:264px">1114</div>
<div class="c ca" style="top:264px">952</div>
<div class="c cb" style="top:264px"><i class="u" style="transform:scaleX(0.900);margin-right:-2.46px">BCA</i><i class="s">/</i><i class="u" style="transform:scaleX(0.907);margin-right:-4.10px">WARNA</i><i class="s">/</i><i class="d">25</i><i class="s">/</i><i class="d">1114</i></div>
<div class="c cc" style="top:264px"><i class="d">04</i><i class="s">/</i><i class="d">08</i><i class="s">/</i><i class="d">2025</i></div>
<div class="c cd" style="top:264px"><i class="d">0408</i><i class="s">/</i><i class="u" style="transform:scaleX(0.890);margin-right:-4.10px">FTSCY</i><i class="s">/</i><i class="u" style="transform:scaleX(0.909);margin-right:-1.64px">WS</i><i class="d">950511352400</i>.<i class="d">00</i><i class="u" style="transform:scaleX(0.902);margin-right:-4.10px">AKBAR</i><i class="p"> </i><i class="u" style="transform:scaleX(0.896);margin-right:-9.84px">NIKMATTULLAH</i></div>
<div class="c cf" style="top:264px">1.352.400,00</div>
<div class="c cg" style="top:264px"><i class="d">543</i>.<i class="d">554</i>.<i class="d">191</i></div>
<div class="c chh" style="top:264px">1000.03</div>
<div class="c ci" style="top:264px">5000.01</div>
<div class="c cj" style="top:264px">&nbsp;-</div>
<div class="a" style="left:1457px;top:280px;width:227px;height:1px;background:#c8c8c8"></div>
<div class="rh" style="top:281px">1115</div>
<div class="c ca" style="top:281px">953</div>
<div class="c cb" style="top:281px"><i class="u" style="transform:scaleX(0.900);margin-right:-2.46px">BCA</i><i class="s">/</i><i class="u" style="transform:scaleX(0.907);margin-right:-4.10px">WARNA</i><i class="s">/</i><i class="d">25</i><i class="s">/</i><i class="d">1115</i></div>
<div class="c cc" style="top:281px"><i class="d">04</i><i class="s">/</i><i class="d">08</i><i class="s">/</i><i class="d">2025</i></div>
<div class="c cd" style="top:281px"><i class="d">0408</i><i class="s">/</i><i class="u" style="transform:scaleX(0.890);margin-right:-4.10px">FTSCY</i><i class="s">/</i><i class="u" style="transform:scaleX(0.909);margin-right:-1.64px">WS</i><i class="d">950514525000</i>.<i class="d">00</i><i class="u" style="transform:scaleX(0.902);margin-right:-4.10px">HENNY</i></div>
<div class="c cf" style="top:281px">4.525.000,00</div>
<div class="c cg" style="top:281px"><i class="d">539</i>.<i class="d">029</i>.<i class="d">191</i></div>
<div class="c chh" style="top:281px">1000.03</div>
<div class="c ci" style="top:281px">5000.01</div>
<div class="c cj" style="top:281px">&nbsp;-</div>
<div class="a" style="left:1457px;top:297px;width:227px;height:1px;background:#c8c8c8"></div>
<div class="rh" style="top:298px">1116</div>
<div class="c ca" style="top:298px">954</div>
<div class="c cb" style="top:298px"><i class="u" style="transform:scaleX(0.900);margin-right:-2.46px">BCA</i><i class="s">/</i><i class="u" style="transform:scaleX(0.907);margin-right:-4.10px">WARNA</i><i class="s">/</i><i class="d">25</i><i class="s">/</i><i class="d">1116</i></div>
<div class="c cc" style="top:298px"><i class="d">05</i><i class="s">/</i><i class="d">08</i><i class="s">/</i><i class="d">2025</i></div>
<div class="c cd" style="top:298px"><i class="d">0508</i><i class="s">/</i><i class="u" style="transform:scaleX(0.890);margin-right:-4.10px">FTSCY</i><i class="s">/</i><i class="u" style="transform:scaleX(0.909);margin-right:-1.64px">WS</i><i class="d">950514984000</i>.<i class="d">00</i><i class="u" style="transform:scaleX(0.893);margin-right:-6.56px">CHUMAIDI</i></div>
<div class="c cf" style="top:298px">4.984.000,00</div>
<div class="c cg" style="top:298px"><i class="d">534</i>.<i class="d">045</i>.<i class="d">191</i></div>
<div class="c chh" style="top:298px">1000.03</div>
<div class="c ci" style="top:298px">5000.01</div>
<div class="c cj" style="top:298px">&nbsp;-</div>
<div class="a" style="left:1457px;top:314px;width:227px;height:1px;background:#c8c8c8"></div>
<div class="rh" style="top:315px">1117</div>
<div class="c ca" style="top:315px">955</div>
<div class="c cb" style="top:315px"><i class="u" style="transform:scaleX(0.900);margin-right:-2.46px">BCA</i><i class="s">/</i><i class="u" style="transform:scaleX(0.907);margin-right:-4.10px">WARNA</i><i class="s">/</i><i class="d">25</i><i class="s">/</i><i class="d">1117</i></div>
<div class="c cc" style="top:315px"><i class="d">05</i><i class="s">/</i><i class="d">08</i><i class="s">/</i><i class="d">2025</i></div>
<div class="c cd" style="top:315px"><i class="d">0508</i><i class="s">/</i><i class="u" style="transform:scaleX(0.890);margin-right:-4.10px">FTSCY</i><i class="s">/</i><i class="u" style="transform:scaleX(0.909);margin-right:-1.64px">WS</i><i class="d">950513191650</i>.<i class="d">00</i><i class="u" style="transform:scaleX(0.902);margin-right:-4.10px">AKBAR</i><i class="p"> </i><i class="u" style="transform:scaleX(0.896);margin-right:-9.84px">NIKMATTULLAH</i></div>
<div class="c cf" style="top:315px">3.191.650,00</div>
<div class="c cg" style="top:315px"><i class="d">530</i>.<i class="d">853</i>.<i class="d">541</i></div>
<div class="c chh" style="top:315px">1000.03</div>
<div class="c ci" style="top:315px">5000.01</div>
<div class="c cj" style="top:315px">&nbsp;-</div>
<div class="a" style="left:1457px;top:331px;width:227px;height:1px;background:#c8c8c8"></div>
<div class="rh" style="top:332px">1118</div>
<div class="c ca" style="top:332px">956</div>
<div class="c cb" style="top:332px"><i class="u" style="transform:scaleX(0.900);margin-right:-2.46px">BCA</i><i class="s">/</i><i class="u" style="transform:scaleX(0.907);margin-right:-4.10px">WARNA</i><i class="s">/</i><i class="d">25</i><i class="s">/</i><i class="d">1118</i></div>
<div class="c cc" style="top:332px"><i class="d">05</i><i class="s">/</i><i class="d">08</i><i class="s">/</i><i class="d">2025</i></div>
<div class="c cd" style="top:332px"><i class="d">0508</i><i class="s">/</i><i class="u" style="transform:scaleX(0.890);margin-right:-4.10px">FTSCY</i><i class="s">/</i><i class="u" style="transform:scaleX(0.909);margin-right:-1.64px">WS</i><i class="d">950513263500</i>.<i class="d">00</i><i class="u" style="transform:scaleX(0.888);margin-right:-4.10px">RIEKY</i></div>
<div class="c cf" style="top:332px">3.263.500,00</div>
<div class="c cg" style="top:332px"><i class="d">527</i>.<i class="d">590</i>.<i class="d">041</i></div>
<div class="c chh" style="top:332px">1000.03</div>
<div class="c ci" style="top:332px">4000.01</div>
<div class="c cj" style="top:332px">&nbsp;-</div>
<div class="a" style="left:1457px;top:348px;width:227px;height:1px;background:#c8c8c8"></div>
<div class="rh" style="top:349px">1119</div>
<div class="c ca" style="top:349px">957</div>
<div class="c cb" style="top:349px"><i class="u" style="transform:scaleX(0.900);margin-right:-2.46px">BCA</i><i class="s">/</i><i class="u" style="transform:scaleX(0.907);margin-right:-4.10px">WARNA</i><i class="s">/</i><i class="d">25</i><i class="s">/</i><i class="d">1119</i></div>
<div class="c cc" style="top:349px"><i class="d">05</i><i class="s">/</i><i class="d">08</i><i class="s">/</i><i class="d">2025</i></div>
<div class="c cd" style="top:349px"><i class="u" style="transform:scaleX(0.868);margin-right:-2.46px">BIF</i><i class="p"> </i><i class="u" style="transform:scaleX(0.893);margin-right:-6.56px">TRANSFER</i><i class="p"> </i><i class="u" style="transform:scaleX(0.897);margin-right:-1.64px">KE</i><i class="p"> </i><i class="d">008</i><i class="u" style="transform:scaleX(0.904);margin-right:-3.28px">DARA</i><i class="p"> </i><i class="u" style="transform:scaleX(0.902);margin-right:-4.10px">BANCA</i><i class="p"> </i><i class="u" style="transform:scaleX(0.894);margin-right:-8.20px">INDONESKBB</i></div>
<div class="c cf" style="top:349px">4.193.914,54</div>
<div class="c cg" style="top:349px"><i class="d">523</i>.<i class="d">396</i>.<i class="d">126</i></div>
<div class="c chh" style="top:349px">1000.03</div>
<div class="c ci" style="top:349px">4000.01</div>
<div class="c cj" style="top:349px">&nbsp;-</div>
<div class="a" style="left:1457px;top:365px;width:227px;height:1px;background:#c8c8c8"></div>
<div class="rh" style="top:366px">1120</div>
<div class="c ca" style="top:366px">958</div>
<div class="c cb" style="top:366px"><i class="u" style="transform:scaleX(0.900);margin-right:-2.46px">BCA</i><i class="s">/</i><i class="u" style="transform:scaleX(0.907);margin-right:-4.10px">WARNA</i><i class="s">/</i><i class="d">25</i><i class="s">/</i><i class="d">1120</i></div>
<div class="c cc" style="top:366px"><i class="d">05</i><i class="s">/</i><i class="d">08</i><i class="s">/</i><i class="d">2025</i></div>
<div class="c cd" style="top:366px"><i class="u" style="transform:scaleX(0.868);margin-right:-2.46px">BIF</i><i class="p"> </i><i class="u" style="transform:scaleX(0.885);margin-right:-4.10px">BIAYA</i><i class="p"> </i><i class="u" style="transform:scaleX(0.900);margin-right:-2.46px">TXN</i><i class="p"> </i><i class="u" style="transform:scaleX(0.897);margin-right:-1.64px">KE</i><i class="p"> </i><i class="d">008</i><i class="u" style="transform:scaleX(0.904);margin-right:-3.28px">DARA</i><i class="p"> </i><i class="u" style="transform:scaleX(0.902);margin-right:-4.10px">BANCA</i><i class="p"> </i><i class="u" style="transform:scaleX(0.894);margin-right:-8.20px">INDONESKBB</i></div>
<div class="c cf" style="top:366px">2.500,00</div>
<div class="c cg" style="top:366px"><i class="d">523</i>.<i class="d">393</i>.<i class="d">626</i></div>
<div class="c chh" style="top:366px">1000.03</div>
<div class="c ci" style="top:366px">7200.02</div>
<div class="c cj" style="top:366px">Biaya Adm - Biaya Adm Bank &amp; Buku Cek</div>
<div class="a" style="left:1457px;top:382px;width:227px;height:1px;background:#c8c8c8"></div>
<div class="c ck" style="top:366px">Biaya Adm</div>
<div class="c cl" style="top:366px">Biaya</div>
<div class="a" style="left:1871px;top:382px;width:27px;height:1px;background:#c8c8c8"></div>
<div class="rh" style="top:383px">1121</div>
<div class="c ca" style="top:383px">959</div>
<div class="c cb" style="top:383px"><i class="u" style="transform:scaleX(0.900);margin-right:-2.46px">BCA</i><i class="s">/</i><i class="u" style="transform:scaleX(0.907);margin-right:-4.10px">WARNA</i><i class="s">/</i><i class="d">25</i><i class="s">/</i><i class="d">1121</i></div>
<div class="c cc" style="top:383px"><i class="d">05</i><i class="s">/</i><i class="d">08</i><i class="s">/</i><i class="d">2025</i></div>
<div class="c cd" style="top:383px"><i class="d">0508</i><i class="s">/</i><i class="u" style="transform:scaleX(0.890);margin-right:-4.10px">FTSCY</i><i class="s">/</i><i class="u" style="transform:scaleX(0.909);margin-right:-1.64px">WS</i><i class="d">950515000000</i>.<i class="d">00</i><i class="u" style="transform:scaleX(0.905);margin-right:-3.28px">NANA</i><i class="p"> </i><i class="u" style="transform:scaleX(0.888);margin-right:-8.20px">SEPTIANSAH</i></div>
<div class="c cf" style="top:383px">5.000.000,00</div>
<div class="c cg" style="top:383px"><i class="d">518</i>.<i class="d">393</i>.<i class="d">626</i></div>
<div class="c chh" style="top:383px">1000.03</div>
<div class="c ci" style="top:383px">5000.01</div>
<div class="c cj" style="top:383px">&nbsp;-</div>
<div class="a" style="left:1457px;top:399px;width:227px;height:1px;background:#c8c8c8"></div>
<div class="rh" style="top:400px">1122</div>
<div class="c ca" style="top:400px">960</div>
<div class="c cb" style="top:400px"><i class="u" style="transform:scaleX(0.900);margin-right:-2.46px">BCA</i><i class="s">/</i><i class="u" style="transform:scaleX(0.907);margin-right:-4.10px">WARNA</i><i class="s">/</i><i class="d">25</i><i class="s">/</i><i class="d">1122</i></div>
<div class="c cc" style="top:400px"><i class="d">05</i><i class="s">/</i><i class="d">08</i><i class="s">/</i><i class="d">2025</i></div>
<div class="c cd" style="top:400px"><i class="d">0508</i><i class="s">/</i><i class="u" style="transform:scaleX(0.890);margin-right:-4.10px">FTSCY</i><i class="s">/</i><i class="u" style="transform:scaleX(0.909);margin-right:-1.64px">WS</i><i class="d">950519768000</i>.<i class="d">00</i><i class="u" style="transform:scaleX(0.896);margin-right:-4.10px">WIKAS</i><i class="p"> </i><i class="u" style="transform:scaleX(0.911);margin-right:-4.92px">MAKMUR</i><i class="p"> </i><i class="u" style="transform:scaleX(0.886);margin-right:-4.10px">WISES</i></div>
<div class="c cf" style="top:400px">9.768.000,00</div>
<div class="c cg" style="top:400px"><i class="d">508</i>.<i class="d">625</i>.<i class="d">626</i></div>
<div class="c chh" style="top:400px">1000.03</div>
<div class="c ci" style="top:400px">5000.01</div>
<div class="c cj" style="top:400px">&nbsp;-</div>
<div class="a" style="left:1457px;top:416px;width:227px;height:1px;background:#c8c8c8"></div>
<div class="rh sel" style="top:417px">1123</div>
<div class="c ca" style="top:417px">961</div>
<div class="c cb" style="top:417px"><i class="u" style="transform:scaleX(0.900);margin-right:-2.46px">BCA</i><i class="s">/</i><i class="u" style="transform:scaleX(0.907);margin-right:-4.10px">WARNA</i><i class="s">/</i><i class="d">25</i><i class="s">/</i><i class="d">1123</i></div>
<div class="c cc" style="top:417px"><i class="d">06</i><i class="s">/</i><i class="d">08</i><i class="s">/</i><i class="d">2025</i></div>
<div class="c cd" style="top:417px"><i class="u" style="transform:scaleX(0.902);margin-right:-1.64px">DR</i><i class="p"> </i><i class="d">008</i><i class="u" style="transform:scaleX(0.888);margin-right:-3.28px">RANI</i><i class="p"> </i><i class="u" style="transform:scaleX(0.896);margin-right:-7.38px">HANDAYANI</i><i class="s">/</i><i class="u" style="transform:scaleX(0.888);margin-right:-1.64px">IM</i><i class="p"> </i><i class="u" style="transform:scaleX(0.897);margin-right:-6.56px">BOULEVAR</i></div>
<div class="c ce" style="top:417px">2.820.000,00</div>
<div class="c cg" style="top:417px"><i class="d">511</i>.<i class="d">445</i>.<i class="d">626</i></div>
<div class="c chh" style="top:417px">1000.03</div>
<div class="c ci" style="top:417px">4000.01</div>
<div class="c cj" style="top:417px">&nbsp;-&nbsp;Penjualan</div>
<div class="a" style="left:1457px;top:433px;width:227px;height:1px;background:#c8c8c8"></div>
<div class="c cl" style="top:417px">Penjualan</div>
<div class="a" style="left:1871px;top:433px;width:27px;height:1px;background:#c8c8c8"></div>
<div class="rh sel" style="top:434px">1124</div>
<div class="c ca" style="top:434px">962</div>
<div class="c cb" style="top:434px"><i class="u" style="transform:scaleX(0.900);margin-right:-2.46px">BCA</i><i class="s">/</i><i class="u" style="transform:scaleX(0.907);margin-right:-4.10px">WARNA</i><i class="s">/</i><i class="d">25</i><i class="s">/</i><i class="d">1124</i></div>
<div class="c cc shade" style="top:434px"><i class="d">07</i><i class="s">/</i><i class="d">08</i><i class="s">/</i><i class="d">2025</i></div>
<div class="c cd" style="top:434px"><i class="d">0608</i><i class="s">/</i><i class="u" style="transform:scaleX(0.890);margin-right:-4.10px">FTSCY</i><i class="s">/</i><i class="u" style="transform:scaleX(0.909);margin-right:-1.64px">WS</i><i class="d">950511144500</i>.<i class="d">00</i><i class="u" style="transform:scaleX(0.899);margin-right:-5.74px">MARICKY</i></div>
<div class="c cf" style="top:434px">1.144.500,00</div>
<div class="c cg" style="top:434px"><i class="d">510</i>.<i class="d">301</i>.<i class="d">126</i></div>
<div class="c chh" style="top:434px">1000.03</div>
<div class="c ci" style="top:434px">5000.01</div>
<div class="c cj" style="top:434px">&nbsp;-</div>
<div class="a" style="left:1457px;top:450px;width:227px;height:1px;background:#c8c8c8"></div>
<div class="rh sel" style="top:451px">1125</div>
<div class="c ca" style="top:451px">963</div>
<div class="c cb" style="top:451px"><i class="u" style="transform:scaleX(0.900);margin-right:-2.46px">BCA</i><i class="s">/</i><i class="u" style="transform:scaleX(0.907);margin-right:-4.10px">WARNA</i><i class="s">/</i><i class="d">25</i><i class="s">/</i><i class="d">1125</i></div>
<div class="c cc shade" style="top:451px"><i class="d">08</i><i class="s">/</i><i class="d">08</i><i class="s">/</i><i class="d">2025</i></div>
<div class="c cd" style="top:451px"><i class="d">0608</i><i class="s">/</i><i class="u" style="transform:scaleX(0.890);margin-right:-4.10px">FTSCY</i><i class="s">/</i><i class="u" style="transform:scaleX(0.909);margin-right:-1.64px">WS</i><i class="d">950511961000</i>.<i class="d">00</i><i class="u" style="transform:scaleX(0.905);margin-right:-3.28px">VONY</i><i class="p"> </i><i class="u" style="transform:scaleX(0.887);margin-right:-7.38px">INDRAYANI</i><i class="p"> </i><i class="u" style="transform:scaleX(0.877);margin-right:-0.82px">P</i></div>
<div class="c cf" style="top:451px">1.961.000,00</div>
<div class="c cg" style="top:451px"><i class="d">508</i>.<i class="d">340</i>.<i class="d">126</i></div>
<div class="c chh" style="top:451px">1000.03</div>
<div class="c ci" style="top:451px">5000.01</div>
<div class="c cj" style="top:451px">&nbsp;-</div>
<div class="a" style="left:1457px;top:467px;width:227px;height:1px;background:#c8c8c8"></div>
<div class="rh" style="top:468px">1126</div>
<div class="c ca" style="top:468px">964</div>
<div class="c cb" style="top:468px"><i class="u" style="transform:scaleX(0.900);margin-right:-2.46px">BCA</i><i class="s">/</i><i class="u" style="transform:scaleX(0.907);margin-right:-4.10px">WARNA</i><i class="s">/</i><i class="d">25</i><i class="s">/</i><i class="d">1126</i></div>
<div class="c cc" style="top:468px"><i class="d">07</i><i class="s">/</i><i class="d">08</i><i class="s">/</i><i class="d">2025</i></div>
<div class="c cd" style="top:468px"><i class="u" style="transform:scaleX(0.868);margin-right:-2.46px">BIF</i><i class="p"> </i><i class="u" style="transform:scaleX(0.893);margin-right:-6.56px">TRANSFER</i><i class="p"> </i><i class="u" style="transform:scaleX(0.902);margin-right:-1.64px">DR</i><i class="p"> </i><i class="d">008</i><i class="u" style="transform:scaleX(0.891);margin-right:-6.56px">WASIATUL</i><i class="p"> </i><i class="u" style="transform:scaleX(0.885);margin-right:-4.10px">FAJAR</i><i class="p"> </i><i class="u" style="transform:scaleX(0.863);margin-right:-2.46px">IST</i></div>
<div class="c ce" style="top:468px">787.500,00</div>
<div class="c cg" style="top:468px"><i class="d">509</i>.<i class="d">127</i>.<i class="d">626</i></div>
<div class="c chh" style="top:468px">1000.03</div>
<div class="c ci" style="top:468px">4000.01</div>
<div class="c cj" style="top:468px">&nbsp;-&nbsp;Penjualan</div>
<div class="a" style="left:1457px;top:484px;width:227px;height:1px;background:#c8c8c8"></div>
<div class="c cl" style="top:468px">Penjualan</div>
<div class="a" style="left:1871px;top:484px;width:27px;height:1px;background:#c8c8c8"></div>
<div class="rh" style="top:485px">1127</div>
<div class="c ca" style="top:485px">965</div>
<div class="c cb" style="top:485px"><i class="u" style="transform:scaleX(0.900);margin-right:-2.46px">BCA</i><i class="s">/</i><i class="u" style="transform:scaleX(0.907);margin-right:-4.10px">WARNA</i><i class="s">/</i><i class="d">25</i><i class="s">/</i><i class="d">1127</i></div>
<div class="c cc" style="top:485px"><i class="d">07</i><i class="s">/</i><i class="d">08</i><i class="s">/</i><i class="d">2025</i></div>
<div class="c cd" style="top:485px"><i class="u" style="transform:scaleX(0.868);margin-right:-2.46px">BIF</i><i class="p"> </i><i class="u" style="transform:scaleX(0.893);margin-right:-6.56px">TRANSFER</i><i class="p"> </i><i class="u" style="transform:scaleX(0.902);margin-right:-1.64px">DR</i><i class="p"> </i><i class="d">002</i><i class="u" style="transform:scaleX(0.897);margin-right:-4.10px">EDWIN</i><i class="p"> </i><i class="u" style="transform:scaleX(0.886);margin-right:-3.28px">DEDI</i><i class="p"> </i><i class="u" style="transform:scaleX(0.904);margin-right:-5.74px">PURNOMO</i></div>
<div class="c ce" style="top:485px">1.782.000,00</div>
<div class="c cg" style="top:485px"><i class="d">510</i>.<i class="d">909</i>.<i class="d">626</i></div>
<div class="c chh" style="top:485px">1000.03</div>
<div class="c ci" style="top:485px">4000.01</div>
<div class="c cj" style="top:485px">&nbsp;-&nbsp;Penjualan</div>
<div class="a" style="left:1457px;top:501px;width:227px;height:1px;background:#c8c8c8"></div>
<div class="c cl" style="top:485px">Penjualan</div>
<div class="a" style="left:1871px;top:501px;width:27px;height:1px;background:#c8c8c8"></div>
<div class="rh" style="top:502px">1128</div>
<div class="c ca" style="top:502px">966</div>
<div class="c cb" style="top:502px"><i class="u" style="transform:scaleX(0.900);margin-right:-2.46px">BCA</i><i class="s">/</i><i class="u" style="transform:scaleX(0.907);margin-right:-4.10px">WARNA</i><i class="s">/</i><i class="d">25</i><i class="s">/</i><i class="d">1128</i></div>
<div class="c cc" style="top:502px"><i class="d">08</i><i class="s">/</i><i class="d">08</i><i class="s">/</i><i class="d">2025</i></div>
<div class="c cd" style="top:502px"><i class="d">0808</i><i class="s">/</i><i class="u" style="transform:scaleX(0.890);margin-right:-4.10px">FTSCY</i><i class="s">/</i><i class="u" style="transform:scaleX(0.909);margin-right:-1.64px">WS</i><i class="d">950111092500</i>.<i class="d">00</i><i class="l">dp</i><i class="p"> </i><i class="l">syran</i><i class="u" style="transform:scaleX(0.884);margin-right:-4.10px">GUSTI</i><i class="p"> </i><i class="u" style="transform:scaleX(0.905);margin-right:-4.10px">AGUNG</i><i class="p"> </i><i class="u" style="transform:scaleX(0.893);margin-right:-4.92px">CHRISM</i></div>
<div class="c ce" style="top:502px">1.092.500,00</div>
<div class="c cg" style="top:502px"><i class="d">512</i>.<i class="d">002</i>.<i class="d">126</i></div>
<div class="c chh" style="top:502px">1000.03</div>
<div class="c ci" style="top:502px">4000.01</div>
<div class="c cj" style="top:502px">GUSTI AGUNG CHRISM - Penjualan</div>
<div class="a" style="left:1457px;top:518px;width:227px;height:1px;background:#c8c8c8"></div>
<div class="c ck" style="top:502px">GUSTI AGUNG CHRISM</div>
<div class="c cl" style="top:502px">Penjualan</div>
<div class="a" style="left:1871px;top:518px;width:27px;height:1px;background:#c8c8c8"></div>
<div class="rh" style="top:519px">1129</div>
<div class="c ca" style="top:519px">967</div>
<div class="c cb" style="top:519px"><i class="u" style="transform:scaleX(0.900);margin-right:-2.46px">BCA</i><i class="s">/</i><i class="u" style="transform:scaleX(0.907);margin-right:-4.10px">WARNA</i><i class="s">/</i><i class="d">25</i><i class="s">/</i><i class="d">1129</i></div>
<div class="c cc" style="top:519px"><i class="d">08</i><i class="s">/</i><i class="d">08</i></div>
<div class="c cd" style="top:519px"><i class="d">0808</i><i class="s">/</i><i class="u" style="transform:scaleX(0.890);margin-right:-4.10px">FTSCY</i><i class="s">/</i><i class="u" style="transform:scaleX(0.909);margin-right:-1.64px">WS</i><i class="d">950511972152</i>.<i class="d">00</i><i class="u" style="transform:scaleX(0.901);margin-right:-4.10px">BENUA</i><i class="p"> </i><i class="u" style="transform:scaleX(0.890);margin-right:-7.38px">SEJAHTERA</i><i class="p"> </i><i class="u" style="transform:scaleX(0.897);margin-right:-1.64px">KE</i></div>
<div class="c cf" style="top:519px">1.972.152,00</div>
<div class="c cg" style="top:519px"><i class="d">510</i>.<i class="d">029</i>.<i class="d">974</i></div>
<div class="c chh" style="top:519px">1000.03</div>
<div class="c ci" style="top:519px">5000.01</div>
<div class="c cj" style="top:519px">&nbsp;-</div>
<div class="a" style="left:1457px;top:535px;width:227px;height:1px;background:#c8c8c8"></div>
<div class="rh" style="top:536px">1130</div>
<div class="c ca" style="top:536px">968</div>
<div class="c cb" style="top:536px"><i class="u" style="transform:scaleX(0.900);margin-right:-2.46px">BCA</i><i class="s">/</i><i class="u" style="transform:scaleX(0.907);margin-right:-4.10px">WARNA</i><i class="s">/</i><i class="d">25</i><i class="s">/</i><i class="d">1130</i></div>
<div class="c cc" style="top:536px"><i class="d">08</i><i class="s">/</i><i class="d">08</i></div>
<div class="c cd" style="top:536px"><i class="d">0808</i><i class="s">/</i><i class="u" style="transform:scaleX(0.890);margin-right:-4.10px">FTSCY</i><i class="s">/</i><i class="u" style="transform:scaleX(0.909);margin-right:-1.64px">WS</i><i class="d">9505113340887</i>.<i class="d">00</i><i class="u" style="transform:scaleX(0.892);margin-right:-4.92px">ULTIMA</i><i class="p"> </i><i class="u" style="transform:scaleX(0.883);margin-right:-4.92px">SOLUSI</i><i class="p"> </i><i class="u" style="transform:scaleX(0.884);margin-right:-3.28px">PAPE</i></div>
<div class="c cf" style="top:536px">13.340.887,00</div>
<div class="c cg" style="top:536px"><i class="d">496</i>.<i class="d">689</i>.<i class="d">087</i></div>
<div class="c chh" style="top:536px">1000.03</div>
<div class="c ci" style="top:536px">5000.01</div>
<div class="c cj" style="top:536px">&nbsp;-</div>
<div class="a" style="left:1457px;top:552px;width:227px;height:1px;background:#c8c8c8"></div>
<div class="rh" style="top:553px">1131</div>
<div class="c ca" style="top:553px">969</div>
<div class="c cb" style="top:553px"><i class="u" style="transform:scaleX(0.900);margin-right:-2.46px">BCA</i><i class="s">/</i><i class="u" style="transform:scaleX(0.907);margin-right:-4.10px">WARNA</i><i class="s">/</i><i class="d">25</i><i class="s">/</i><i class="d">1131</i></div>
<div class="c cc" style="top:553px"><i class="d">08</i><i class="s">/</i><i class="d">08</i><i class="s">/</i><i class="d">2025</i></div>
<div class="c cd" style="top:553px"><i class="d">0808</i><i class="s">/</i><i class="u" style="transform:scaleX(0.890);margin-right:-4.10px">FTSCY</i><i class="s">/</i><i class="u" style="transform:scaleX(0.909);margin-right:-1.64px">WS</i><i class="d">9503111975000</i>.<i class="d">00</i><i class="l">bayar</i><i class="p"> </i><i class="l">dp</i><i class="p"> </i><i class="l">packaging</i><i class="p"> </i><i class="l">an</i><i class="p"> </i><i class="l">rani</i><i class="u" style="transform:scaleX(0.909);margin-right:-4.92px">NYOMAN</i><i class="p"> </i><i class="u" style="transform:scaleX(0.888);margin-right:-3.28px">RANI</i><i class="p"> </i><i class="u" style="transform:scaleX(0.880);margin-right:-3.28px">SARI</i></div>
<div class="c ce" style="top:553px">11.975.000,00</div>
<div class="c cg" style="top:553px"><i class="d">508</i>.<i class="d">664</i>.<i class="d">087</i></div>
<div class="c chh" style="top:553px">1000.03</div>
<div class="c ci" style="top:553px">4000.01</div>
<div class="c cj" style="top:553px">&nbsp;-&nbsp;Penjualan</div>
<div class="a" style="left:1457px;top:569px;width:227px;height:1px;background:#c8c8c8"></div>
<div class="c cl" style="top:553px">Penjualan</div>
<div class="a" style="left:1871px;top:569px;width:27px;height:1px;background:#c8c8c8"></div>
<div class="rh" style="top:570px">1132</div>
<div class="c ca" style="top:570px">970</div>
<div class="c cb" style="top:570px"><i class="u" style="transform:scaleX(0.900);margin-right:-2.46px">BCA</i><i class="s">/</i><i class="u" style="transform:scaleX(0.907);margin-right:-4.10px">WARNA</i><i class="s">/</i><i class="d">25</i><i class="s">/</i><i class="d">1132</i></div>
<div class="c cc" style="top:570px"><i class="d">08</i><i class="s">/</i><i class="d">08</i></div>
<div class="c cd" style="top:570px"><i class="u" style="transform:scaleX(0.868);margin-right:-2.46px">BIF</i><i class="p"> </i><i class="u" style="transform:scaleX(0.893);margin-right:-6.56px">TRANSFER</i><i class="p"> </i><i class="u" style="transform:scaleX(0.897);margin-right:-1.64px">KE</i><i class="p"> </i><i class="d">008</i><i class="u" style="transform:scaleX(0.904);margin-right:-3.28px">DARA</i><i class="p"> </i><i class="u" style="transform:scaleX(0.902);margin-right:-4.10px">BANCA</i><i class="p"> </i><i class="u" style="transform:scaleX(0.894);margin-right:-8.20px">INDONESKBB</i></div>
<div class="c cf" style="top:570px">34.419.758,70</div>
<div class="c cg" style="top:570px"><i class="d">474</i>.<i class="d">244</i>.<i class="d">328</i></div>
<div class="c chh" style="top:570px">1000.03</div>
<div class="c ci" style="top:570px">5000.01</div>
<div class="c cj" style="top:570px">&nbsp;-</div>
<div class="a" style="left:1457px;top:586px;width:227px;height:1px;background:#c8c8c8"></div>
<div class="rh" style="top:587px">1133</div>
<div class="c ca" style="top:587px">971</div>
<div class="c cb" style="top:587px"><i class="u" style="transform:scaleX(0.900);margin-right:-2.46px">BCA</i><i class="s">/</i><i class="u" style="transform:scaleX(0.907);margin-right:-4.10px">WARNA</i><i class="s">/</i><i class="d">25</i><i class="s">/</i><i class="d">1133</i></div>
<div class="c cc" style="top:587px"><i class="d">08</i><i class="s">/</i><i class="d">08</i></div>
<div class="c cd" style="top:587px"><i class="u" style="transform:scaleX(0.868);margin-right:-2.46px">BIF</i><i class="p"> </i><i class="u" style="transform:scaleX(0.885);margin-right:-4.10px">BIAYA</i><i class="p"> </i><i class="u" style="transform:scaleX(0.900);margin-right:-2.46px">TXN</i><i class="p"> </i><i class="u" style="transform:scaleX(0.897);margin-right:-1.64px">KE</i><i class="p"> </i><i class="d">008</i><i class="u" style="transform:scaleX(0.904);margin-right:-3.28px">DARA</i><i class="p"> </i><i class="u" style="transform:scaleX(0.902);margin-right:-4.10px">BANCA</i><i class="p"> </i><i class="u" style="transform:scaleX(0.894);margin-right:-8.20px">INDONESKBB</i></div>
<div class="c cf" style="top:587px">2.500,00</div>
<div class="c cg" style="top:587px"><i class="d">474</i>.<i class="d">241</i>.<i class="d">828</i></div>
<div class="c chh" style="top:587px">1000.03</div>
<div class="c ci" style="top:587px">7200.02</div>
<div class="c cj" style="top:587px">Biaya Adm - Biaya Adm Bank &amp; Buku Cek</div>
<div class="a" style="left:1457px;top:603px;width:227px;height:1px;background:#c8c8c8"></div>
<div class="c ck" style="top:587px">Biaya Adm</div>
<div class="c cl" style="top:587px">Biaya</div>
<div class="a" style="left:1871px;top:603px;width:27px;height:1px;background:#c8c8c8"></div>
<div class="rh" style="top:604px">1134</div>
<div class="c ca" style="top:604px">972</div>
<div class="c cb" style="top:604px"><i class="u" style="transform:scaleX(0.900);margin-right:-2.46px">BCA</i><i class="s">/</i><i class="u" style="transform:scaleX(0.907);margin-right:-4.10px">WARNA</i><i class="s">/</i><i class="d">25</i><i class="s">/</i><i class="d">1134</i></div>
<div class="c cc" style="top:604px"><i class="d">08</i><i class="s">/</i><i class="d">08</i><i class="s">/</i><i class="d">2025</i></div>
<div class="c cd" style="top:604px"><i class="u" style="transform:scaleX(0.868);margin-right:-2.46px">BIF</i><i class="p"> </i><i class="u" style="transform:scaleX(0.893);margin-right:-6.56px">TRANSFER</i><i class="p"> </i><i class="u" style="transform:scaleX(0.902);margin-right:-1.64px">DR</i><i class="p"> </i><i class="d">008</i><i class="u" style="transform:scaleX(0.911);margin-right:-7.38px">MOCHAMMAD</i><i class="p"> </i><i class="u" style="transform:scaleX(0.892);margin-right:-5.74px">RABIYUL</i></div>
<div class="c ce" style="top:604px">1.450.000,00</div>
<div class="c cg" style="top:604px"><i class="d">475</i>.<i class="d">691</i>.<i class="d">828</i></div>
<div class="c chh" style="top:604px">1000.03</div>
<div class="c ci" style="top:604px">4000.01</div>
<div class="c cj" style="top:604px">&nbsp;-&nbsp;Penjualan</div>
<div class="a" style="left:1457px;top:620px;width:227px;height:1px;background:#c8c8c8"></div>
<div class="c cl" style="top:604px">Penjualan</div>
<div class="a" style="left:1871px;top:620px;width:27px;height:1px;background:#c8c8c8"></div>
<div class="rh" style="top:621px">1135</div>
<div class="c ca" style="top:621px">973</div>
<div class="c cb" style="top:621px"><i class="u" style="transform:scaleX(0.900);margin-right:-2.46px">BCA</i><i class="s">/</i><i class="u" style="transform:scaleX(0.907);margin-right:-4.10px">WARNA</i><i class="s">/</i><i class="d">25</i><i class="s">/</i><i class="d">1135</i></div>
<div class="c cc" style="top:621px"><i class="d">08</i><i class="s">/</i><i class="d">08</i></div>
<div class="c cd" style="top:621px"><i class="d">0808</i><i class="s">/</i><i class="u" style="transform:scaleX(0.890);margin-right:-4.10px">FTSCY</i><i class="s">/</i><i class="u" style="transform:scaleX(0.909);margin-right:-1.64px">WS</i><i class="d">950511254000</i>.<i class="d">00</i><i class="u" style="transform:scaleX(0.886);margin-right:-4.10px">KARTI</i></div>
<div class="c cf" style="top:621px">1.254.000,00</div>
<div class="c cg" style="top:621px"><i class="d">474</i>.<i class="d">437</i>.<i class="d">828</i></div>
<div class="c chh" style="top:621px">1000.03</div>
<div class="c ci" style="top:621px">5000.01</div>
<div class="c cj" style="top:621px">&nbsp;-</div>
<div class="a" style="left:1457px;top:637px;width:227px;height:1px;background:#c8c8c8"></div>
<div class="rh" style="top:638px">1136</div>
<div class="c ca" style="top:638px">974</div>
<div class="c cb" style="top:638px"><i class="u" style="transform:scaleX(0.900);margin-right:-2.46px">BCA</i><i class="s">/</i><i class="u" style="transform:scaleX(0.907);margin-right:-4.10px">WARNA</i><i class="s">/</i><i class="d">25</i><i class="s">/</i><i class="d">1136</i></div>
<div class="c cc" style="top:638px"><i class="d">08</i><i class="s">/</i><i class="d">08</i></div>
<div class="c cd" style="top:638px"><i class="u" style="transform:scaleX(0.868);margin-right:-2.46px">BIF</i><i class="p"> </i><i class="u" style="transform:scaleX(0.893);margin-right:-6.56px">TRANSFER</i><i class="p"> </i><i class="u" style="transform:scaleX(0.897);margin-right:-1.64px">KE</i><i class="p"> </i><i class="d">008</i><i class="u" style="transform:scaleX(0.904);margin-right:-3.28px">DARA</i><i class="p"> </i><i class="u" style="transform:scaleX(0.902);margin-right:-4.10px">BANCA</i><i class="p"> </i><i class="u" style="transform:scaleX(0.894);margin-right:-8.20px">INDONESKBB</i></div>
<div class="c cf" style="top:638px">11.146.758,96</div>
<div class="c cg" style="top:638px"><i class="d">463</i>.<i class="d">291</i>.<i class="d">069</i></div>
<div class="c chh" style="top:638px">1000.03</div>
<div class="c ci" style="top:638px">5000.01</div>
<div class="c cj" style="top:638px">&nbsp;-</div>
<div class="a" style="left:1457px;top:654px;width:227px;height:1px;background:#c8c8c8"></div>
<div class="rh" style="top:655px">1137</div>
<div class="c ca" style="top:655px">975</div>
<div class="c cb" style="top:655px"><i class="u" style="transform:scaleX(0.900);margin-right:-2.46px">BCA</i><i class="s">/</i><i class="u" style="transform:scaleX(0.907);margin-right:-4.10px">WARNA</i><i class="s">/</i><i class="d">25</i><i class="s">/</i><i class="d">1137</i></div>
<div class="c cc" style="top:655px"><i class="d">08</i><i class="s">/</i><i class="d">08</i></div>
<div class="c cd" style="top:655px"><i class="u" style="transform:scaleX(0.868);margin-right:-2.46px">BIF</i><i class="p"> </i><i class="u" style="transform:scaleX(0.885);margin-right:-4.10px">BIAYA</i><i class="p"> </i><i class="u" style="transform:scaleX(0.900);margin-right:-2.46px">TXN</i><i class="p"> </i><i class="u" style="transform:scaleX(0.897);margin-right:-1.64px">KE</i><i class="p"> </i><i class="d">008</i><i class="u" style="transform:scaleX(0.904);margin-right:-3.28px">DARA</i><i class="p"> </i><i class="u" style="transform:scaleX(0.902);margin-right:-4.10px">BANCA</i><i class="p"> </i><i class="u" style="transform:scaleX(0.894);margin-right:-8.20px">INDONESKBB</i></div>
<div class="c cf" style="top:655px">2.500,00</div>
<div class="c cg" style="top:655px"><i class="d">463</i>.<i class="d">288</i>.<i class="d">569</i></div>
<div class="c chh" style="top:655px">1000.03</div>
<div class="c ci" style="top:655px">7200.02</div>
<div class="c cj" style="top:655px">Biaya Adm - Biaya Adm Bank &amp; Buku Cek</div>
<div class="a" style="left:1457px;top:671px;width:227px;height:1px;background:#c8c8c8"></div>
<div class="c ck" style="top:655px">Biaya Adm</div>
<div class="c cl" style="top:655px">Biaya</div>
<div class="a" style="left:1871px;top:671px;width:27px;height:1px;background:#c8c8c8"></div>
<div class="rh" style="top:672px">1138</div>
<div class="c ca" style="top:672px">976</div>
<div class="c cb" style="top:672px"><i class="u" style="transform:scaleX(0.900);margin-right:-2.46px">BCA</i><i class="s">/</i><i class="u" style="transform:scaleX(0.907);margin-right:-4.10px">WARNA</i><i class="s">/</i><i class="d">25</i><i class="s">/</i><i class="d">1138</i></div>
<div class="c cc" style="top:672px"><i class="d">08</i><i class="s">/</i><i class="d">08</i></div>
<div class="c cd" style="top:672px"><i class="d">0808</i><i class="s">/</i><i class="u" style="transform:scaleX(0.890);margin-right:-4.10px">FTSCY</i><i class="s">/</i><i class="u" style="transform:scaleX(0.909);margin-right:-1.64px">WS</i><i class="d">950511435000</i>.<i class="d">00</i><i class="u" style="transform:scaleX(0.888);margin-right:-6.56px">MUHLISIN</i></div>
<div class="c cf" style="top:672px">1.435.000,00</div>
<div class="c cg" style="top:672px"><i class="d">461</i>.<i class="d">853</i>.<i class="d">569</i></div>
<div class="c chh" style="top:672px">1000.03</div>
<div class="c ci" style="top:672px">5000.01</div>
<div class="c cj" style="top:672px">&nbsp;-</div>
<div class="a" style="left:1457px;top:688px;width:227px;height:1px;background:#c8c8c8"></div>
<div class="rh" style="top:689px">1139</div>
<div class="c ca" style="top:689px">977</div>
<div class="c cb" style="top:689px"><i class="u" style="transform:scaleX(0.900);margin-right:-2.46px">BCA</i><i class="s">/</i><i class="u" style="transform:scaleX(0.907);margin-right:-4.10px">WARNA</i><i class="s">/</i><i class="d">25</i><i class="s">/</i><i class="d">1139</i></div>
<div class="c cc" style="top:689px"><i class="d">08</i><i class="s">/</i><i class="d">08</i></div>
<div class="c cd" style="top:689px"><i class="d">0808</i><i class="s">/</i><i class="u" style="transform:scaleX(0.890);margin-right:-4.10px">FTSCY</i><i class="s">/</i><i class="u" style="transform:scaleX(0.909);margin-right:-1.64px">WS</i><i class="d">950515000000</i>.<i class="d">00</i><i class="u" style="transform:scaleX(0.905);margin-right:-3.28px">NANA</i><i class="p"> </i><i class="u" style="transform:scaleX(0.888);margin-right:-8.20px">SEPTIANSAH</i></div>
<div class="c cf" style="top:689px">5.000.000,00</div>
<div class="c cg" style="top:689px"><i class="d">456</i>.<i class="d">853</i>.<i class="d">569</i></div>
<div class="c chh" style="top:689px">1000.03</div>
<div class="c ci" style="top:689px">5000.01</div>
<div class="c cj" style="top:689px">&nbsp;-</div>
<div class="a" style="left:1457px;top:705px;width:227px;height:1px;background:#c8c8c8"></div>
<div class="rh" style="top:706px">1140</div>
<div class="c ca" style="top:706px">978</div>
<div class="c cb" style="top:706px"><i class="u" style="transform:scaleX(0.900);margin-right:-2.46px">BCA</i><i class="s">/</i><i class="u" style="transform:scaleX(0.907);margin-right:-4.10px">WARNA</i><i class="s">/</i><i class="d">25</i><i class="s">/</i><i class="d">1140</i></div>
<div class="c cc" style="top:706px"><i class="d">09</i><i class="s">/</i><i class="d">08</i></div>
<div class="c cd" style="top:706px"><i class="d">0908</i><i class="s">/</i><i class="u" style="transform:scaleX(0.890);margin-right:-4.10px">FTSCY</i><i class="s">/</i><i class="u" style="transform:scaleX(0.909);margin-right:-1.64px">WS</i><i class="d">9505120000000</i>.<i class="d">00</i><i class="u" style="transform:scaleX(0.905);margin-right:-3.28px">NANA</i><i class="p"> </i><i class="u" style="transform:scaleX(0.888);margin-right:-8.20px">SEPTIANSAH</i></div>
<div class="c cf" style="top:706px">20.000.000,00</div>
<div class="c cg" style="top:706px"><i class="d">436</i>.<i class="d">853</i>.<i class="d">569</i></div>
<div class="c chh" style="top:706px">1000.03</div>
<div class="c ci" style="top:706px">5000.01</div>
<div class="c cj" style="top:706px">&nbsp;-</div>
<div class="a" style="left:1457px;top:722px;width:227px;height:1px;background:#c8c8c8"></div>
<div class="rh" style="top:723px">1141</div>
<div class="c ca" style="top:723px">979</div>
<div class="c cb" style="top:723px"><i class="u" style="transform:scaleX(0.900);margin-right:-2.46px">BCA</i><i class="s">/</i><i class="u" style="transform:scaleX(0.907);margin-right:-4.10px">WARNA</i><i class="s">/</i><i class="d">25</i><i class="s">/</i><i class="d">1141</i></div>
<div class="c cc" style="top:723px"><i class="d">09</i><i class="s">/</i><i class="d">08</i><i class="s">/</i><i class="d">2025</i></div>
<div class="c cd" style="top:723px"><i class="d">0908</i><i class="s">/</i><i class="u" style="transform:scaleX(0.890);margin-right:-4.10px">FTSCY</i><i class="s">/</i><i class="u" style="transform:scaleX(0.909);margin-right:-1.64px">WS</i><i class="d">950311378500</i>.<i class="d">00</i><i class="l">inv</i><i class="p"> </i><i class="d">93</i><i class="u" style="transform:scaleX(0.905);margin-right:-4.10px">AGUNG</i><i class="p"> </i><i class="u" style="transform:scaleX(0.895);margin-right:-8.20px">PRIYANDANA</i><i class="p"> </i><i class="u" style="transform:scaleX(0.795);margin-right:-0.82px">I</i></div>
<div class="c ce" style="top:723px">1.378.500,00</div>
<div class="c cg" style="top:723px"><i class="d">438</i>.<i class="d">232</i>.<i class="d">069</i></div>
<div class="c chh" style="top:723px">1000.03</div>
<div class="c ci" style="top:723px">4000.01</div>
<div class="c cj" style="top:723px">Agung Priyandana - Penjualan</div>
<div class="a" style="left:1457px;top:739px;width:227px;height:1px;background:#c8c8c8"></div>
<div class="a" style="left:1684px;top:722px;width:1px;height:18px;background:#d0d0d0"></div>
<div class="c ck" style="top:723px">Agung Priyandana</div>
<div class="c cl" style="top:723px">Penjualan</div>
<div class="a" style="left:1871px;top:739px;width:27px;height:1px;background:#c8c8c8"></div>
<div class="a" style="left:1870px;top:722px;width:1px;height:18px;background:#d0d0d0"></div>
<div class="rh" style="top:740px">1142</div>
<div class="c ca" style="top:740px">980</div>
<div class="c cb" style="top:740px"><i class="u" style="transform:scaleX(0.900);margin-right:-2.46px">BCA</i><i class="s">/</i><i class="u" style="transform:scaleX(0.907);margin-right:-4.10px">WARNA</i><i class="s">/</i><i class="d">25</i><i class="s">/</i><i class="d">1142</i></div>
<div class="c cc" style="top:740px"><i class="d">09</i><i class="s">/</i><i class="d">08</i><i class="s">/</i><i class="d">2025</i></div>
<div class="c cd" style="top:740px"><i class="d">0908</i><i class="s">/</i><i class="u" style="transform:scaleX(0.890);margin-right:-4.10px">FTSCY</i><i class="s">/</i><i class="u" style="transform:scaleX(0.909);margin-right:-1.64px">WS</i><i class="d">9505120000000</i>.<i class="d">00</i><i class="u" style="transform:scaleX(0.918);margin-right:-1.64px">WD</i><i class="d">357439701</i><i class="p"> </i><i class="u" style="transform:scaleX(0.895);margin-right:-3.28px">TKPD</i><i class="p"> </i><i class="u" style="transform:scaleX(0.888);margin-right:-0.82px">T</i><i class="p"> </i><i class="u" style="transform:scaleX(0.884);margin-right:-10.66px">KPDIDLCPJLLFE</i><i class="p"> </i><i class="l">pay</i><i class="p"> </i><i class="u" style="transform:scaleX(0.892);margin-right:-7.38px">TOKOPEDIA</i><i class="p"> </i><i class="u" style="transform:scaleX(0.883);margin-right:-1.64px">PT</i></div>
<div class="c ce" style="top:740px">20.000.000,00</div>
<div class="c cg" style="top:740px"><i class="d">458</i>.<i class="d">232</i>.<i class="d">069</i></div>
<div class="c chh" style="top:740px">1000.03</div>
<div class="c ci" style="top:740px">4000.01</div>
<div class="c cj" style="top:740px">&nbsp;-&nbsp;Penjualan</div>
<div class="a" style="left:1457px;top:756px;width:227px;height:1px;background:#c8c8c8"></div>
<div class="c cl" style="top:740px">Penjualan</div>
<div class="a" style="left:1871px;top:756px;width:27px;height:1px;background:#c8c8c8"></div>
<div class="rh" style="top:757px">1143</div>
<div class="c ca" style="top:757px">981</div>
<div class="c cb" style="top:757px"><i class="u" style="transform:scaleX(0.900);margin-right:-2.46px">BCA</i><i class="s">/</i><i class="u" style="transform:scaleX(0.907);margin-right:-4.10px">WARNA</i><i class="s">/</i><i class="d">25</i><i class="s">/</i><i class="d">1143</i></div>
<div class="c cc" style="top:757px"><i class="d">09</i><i class="s">/</i><i class="d">08</i><i class="s">/</i><i class="d">2025</i></div>
<div class="c cd" style="top:757px"><i class="d">0908</i><i class="s">/</i><i class="u" style="transform:scaleX(0.890);margin-right:-4.10px">FTSCY</i><i class="s">/</i><i class="u" style="transform:scaleX(0.909);margin-right:-1.64px">WS</i><i class="d">9505186000000</i>.<i class="d">00200008203</i>_<i class="d">6117611843503348490232984</i><i class="u" style="transform:scaleX(0.884);margin-right:-4.92px">AIRPAY</i><i class="p"> </i><i class="u" style="transform:scaleX(0.887);margin-right:-9.02px">INTERNATION</i></div>
<div class="c ce" style="top:757px">86.000.000,00</div>
<div class="c cg" style="top:757px"><i class="d">544</i>.<i class="d">232</i>.<i class="d">069</i></div>
<div class="c chh" style="top:757px">1000.03</div>
<div class="c ci" style="top:757px">4000.01</div>
<div class="c cj" style="top:757px">&nbsp;-&nbsp;Penjualan</div>
<div class="a" style="left:1457px;top:773px;width:227px;height:1px;background:#c8c8c8"></div>
<div class="c cl" style="top:757px">Penjualan</div>
<div class="a" style="left:1871px;top:773px;width:27px;height:1px;background:#c8c8c8"></div>
<div class="rh" style="top:774px">1144</div>
<div class="c ca" style="top:774px">982</div>
<div class="c cb" style="top:774px"><i class="u" style="transform:scaleX(0.900);margin-right:-2.46px">BCA</i><i class="s">/</i><i class="u" style="transform:scaleX(0.907);margin-right:-4.10px">WARNA</i><i class="s">/</i><i class="d">25</i><i class="s">/</i><i class="d">1144</i></div>
<div class="c cc" style="top:774px"><i class="d">09</i><i class="s">/</i><i class="d">08</i></div>
<div class="c cd" style="top:774px"><i class="d">0908</i><i class="s">/</i><i class="u" style="transform:scaleX(0.888);margin-right:-4.10px">FTFVA</i><i class="s">/</i><i class="u" style="transform:scaleX(0.909);margin-right:-1.64px">WS</i><i class="d">9505112716</i><i class="s">/</i><i class="u" style="transform:scaleX(0.894);margin-right:-5.74px">SENTRAL</i><i class="p"> </i><i class="u" style="transform:scaleX(0.902);margin-right:-3.28px">CARG</i>--<i class="p"> </i><i class="d">00068528</i></div>
<div class="c cf" style="top:774px">129.000,00</div>
<div class="c cg" style="top:774px"><i class="d">544</i>.<i class="d">103</i>.<i class="d">069</i></div>
<div class="c chh" style="top:774px">1000.03</div>
<div class="c ci" style="top:774px">6203.05</div>
<div class="c cj" style="top:774px">&nbsp;-</div>
<div class="a" style="left:1457px;top:790px;width:227px;height:1px;background:#c8c8c8"></div>
<div class="rh" style="top:791px">1145</div>
<div class="c ca" style="top:791px">983</div>
<div class="c cb" style="top:791px"><i class="u" style="transform:scaleX(0.900);margin-right:-2.46px">BCA</i><i class="s">/</i><i class="u" style="transform:scaleX(0.907);margin-right:-4.10px">WARNA</i><i class="s">/</i><i class="d">25</i><i class="s">/</i><i class="d">1145</i></div>
<div class="c cc" style="top:791px"><i class="d">10</i><i class="s">/</i><i class="d">08</i><i class="s">/</i><i class="d">2025</i></div>
<div class="c cd" style="top:791px"><i class="d">1008</i><i class="s">/</i><i class="u" style="transform:scaleX(0.890);margin-right:-4.10px">FTSCY</i><i class="s">/</i><i class="u" style="transform:scaleX(0.909);margin-right:-1.64px">WS</i><i class="d">950319320000</i>.<i class="d">00</i><i class="l">pack</i><i class="p"> </i><i class="l">mamikeki</i><i class="p"> </i><i class="u" style="transform:scaleX(0.897);margin-right:-3.28px">FANY</i><i class="p"> </i><i class="u" style="transform:scaleX(0.896);margin-right:-8.20px">OKVIANSYAH</i></div>
<div class="c ce" style="top:791px">9.320.000,00</div>
<div class="c cg" style="top:791px"><i class="d">553</i>.<i class="d">423</i>.<i class="d">069</i></div>
<div class="c chh" style="top:791px">1000.03</div>
<div class="c ci" style="top:791px">4000.01</div>
<div class="c cj" style="top:791px">&nbsp;-&nbsp;Penjualan</div>
<div class="a" style="left:1457px;top:807px;width:227px;height:1px;background:#c8c8c8"></div>
<div class="c cl" style="top:791px">Penjualan</div>
<div class="a" style="left:1871px;top:807px;width:27px;height:1px;background:#c8c8c8"></div>
<div class="rh" style="top:808px">1146</div>
<div class="c ca" style="top:808px">984</div>
<div class="c cb" style="top:808px"><i class="u" style="transform:scaleX(0.900);margin-right:-2.46px">BCA</i><i class="s">/</i><i class="u" style="transform:scaleX(0.907);margin-right:-4.10px">WARNA</i><i class="s">/</i><i class="d">25</i><i class="s">/</i><i class="d">1146</i></div>
<div class="c cc" style="top:808px"><i class="d">10</i><i class="s">/</i><i class="d">08</i><i class="s">/</i><i class="d">2025</i></div>
<div class="c cd" style="top:808px"><i class="d">1008</i><i class="s">/</i><i class="u" style="transform:scaleX(0.890);margin-right:-4.10px">FTSCY</i><i class="s">/</i><i class="u" style="transform:scaleX(0.909);margin-right:-1.64px">WS</i><i class="d">950312397000</i>.<i class="d">00</i><i class="l">bmt</i><i class="u" style="transform:scaleX(0.885);margin-right:-4.10px">SEPTA</i><i class="p"> </i><i class="u" style="transform:scaleX(0.905);margin-right:-4.92px">KARWAN</i></div>
<div class="c ce" style="top:808px">2.397.000,00</div>
<div class="c cg" style="top:808px"><i class="d">555</i>.<i class="d">820</i>.<i class="d">069</i></div>
<div class="c chh" style="top:808px">1000.03</div>
<div class="c ci" style="top:808px">4000.01</div>
<div class="c cj" style="top:808px">&nbsp;-&nbsp;Penjualan</div>
<div class="a" style="left:1457px;top:824px;width:227px;height:1px;background:#c8c8c8"></div>
<div class="c cl" style="top:808px">Penjualan</div>
<div class="a" style="left:1871px;top:824px;width:27px;height:1px;background:#c8c8c8"></div>
<div class="rh" style="top:825px">1147</div>
<div class="c ca" style="top:825px">985</div>
<div class="c cb" style="top:825px"><i class="u" style="transform:scaleX(0.900);margin-right:-2.46px">BCA</i><i class="s">/</i><i class="u" style="transform:scaleX(0.907);margin-right:-4.10px">WARNA</i><i class="s">/</i><i class="d">25</i><i class="s">/</i><i class="d">1147</i></div>
<div class="c cc" style="top:825px"><i class="d">10</i><i class="s">/</i><i class="d">08</i><i class="s">/</i><i class="d">2025</i></div>
<div class="c cd" style="top:825px"><i class="d">1008</i><i class="s">/</i><i class="u" style="transform:scaleX(0.890);margin-right:-4.10px">FTSCY</i><i class="s">/</i><i class="u" style="transform:scaleX(0.909);margin-right:-1.64px">WS</i><i class="d">95031450000</i>.<i class="d">00</i><i class="u" style="transform:scaleX(0.885);margin-right:-4.10px">SEPTA</i><i class="p"> </i><i class="u" style="transform:scaleX(0.905);margin-right:-4.92px">KARWAN</i></div>
<div class="c ce" style="top:825px">450.000,00</div>
<div class="c cg" style="top:825px"><i class="d">556</i>.<i class="d">270</i>.<i class="d">069</i></div>
<div class="c chh" style="top:825px">1000.03</div>
<div class="c ci" style="top:825px">4000.01</div>
<div class="c cj" style="top:825px">&nbsp;-&nbsp;Penjualan</div>
<div class="a" style="left:1457px;top:841px;width:227px;height:1px;background:#c8c8c8"></div>
<div class="c cl" style="top:825px">Penjualan</div>
<div class="a" style="left:1871px;top:841px;width:27px;height:1px;background:#c8c8c8"></div>
<div class="rh" style="top:842px">1148</div>
<div class="c ca" style="top:842px">986</div>
<div class="c cb" style="top:842px"><i class="u" style="transform:scaleX(0.900);margin-right:-2.46px">BCA</i><i class="s">/</i><i class="u" style="transform:scaleX(0.907);margin-right:-4.10px">WARNA</i><i class="s">/</i><i class="d">25</i><i class="s">/</i><i class="d">1148</i></div>
<div class="c cc" style="top:842px"><i class="d">10</i><i class="s">/</i><i class="d">08</i></div>
<div class="c cd" style="top:842px"><i class="d">1008</i><i class="s">/</i><i class="u" style="transform:scaleX(0.888);margin-right:-4.10px">FTFVA</i><i class="s">/</i><i class="u" style="transform:scaleX(0.909);margin-right:-1.64px">WS</i><i class="d">9505139010</i><i class="s">/</i><i class="u" style="transform:scaleX(0.905);margin-right:-3.28px">DANA</i>--<i class="p"> </i><i class="d">88211956413</i></div>
<div class="c cf" style="top:842px">1.000.000,00</div>
<div class="c cg" style="top:842px"><i class="d">555</i>.<i class="d">270</i>.<i class="d">069</i></div>
<div class="c chh" style="top:842px">1000.03</div>
<div class="c ci" style="top:842px">5000.01</div>
<div class="c cj" style="top:842px">&nbsp;-</div>
<div class="a" style="left:1457px;top:858px;width:227px;height:1px;background:#c8c8c8"></div>
<div class="rh" style="top:859px">1149</div>
<div class="c ca" style="top:859px">987</div>
<div class="c cb" style="top:859px"><i class="u" style="transform:scaleX(0.900);margin-right:-2.46px">BCA</i><i class="s">/</i><i class="u" style="transform:scaleX(0.907);margin-right:-4.10px">WARNA</i><i class="s">/</i><i class="d">25</i><i class="s">/</i><i class="d">1149</i></div>
<div class="c cc" style="top:859px"><i class="d">11</i><i class="s">/</i><i class="d">08</i><i class="s">/</i><i class="d">2025</i></div>
<div class="c cd" style="top:859px"><i class="u" style="transform:scaleX(0.868);margin-right:-2.46px">BIF</i><i class="p"> </i><i class="u" style="transform:scaleX(0.893);margin-right:-6.56px">TRANSFER</i><i class="p"> </i><i class="u" style="transform:scaleX(0.902);margin-right:-1.64px">DR</i><i class="p"> </i><i class="d">009</i><i class="u" style="transform:scaleX(0.877);margin-right:-3.28px">YESI</i><i class="p"> </i><i class="u" style="transform:scaleX(0.885);margin-right:-4.10px">FAJAR</i><i class="p"> </i><i class="u" style="transform:scaleX(0.891);margin-right:-5.74px">PANGEST</i></div>
<div class="c ce" style="top:859px">2.329.000,00</div>
<div class="c cg" style="top:859px"><i class="d">557</i>.<i class="d">599</i>.<i class="d">069</i></div>
<div class="c chh" style="top:859px">1000.03</div>
<div class="c ci" style="top:859px">4000.01</div>
<div class="c cj" style="top:859px">&nbsp;-&nbsp;Penjualan</div>
<div class="a" style="left:1457px;top:875px;width:227px;height:1px;background:#c8c8c8"></div>
<div class="c cl" style="top:859px">Penjualan</div>
<div class="a" style="left:1871px;top:875px;width:27px;height:1px;background:#c8c8c8"></div>
<div class="rh" style="top:876px">1150</div>
<div class="c ca" style="top:876px">988</div>
<div class="c cb" style="top:876px"><i class="u" style="transform:scaleX(0.900);margin-right:-2.46px">BCA</i><i class="s">/</i><i class="u" style="transform:scaleX(0.907);margin-right:-4.10px">WARNA</i><i class="s">/</i><i class="d">25</i><i class="s">/</i><i class="d">1150</i></div>
<div class="c cc" style="top:876px"><i class="d">11</i><i class="s">/</i><i class="d">08</i></div>
<div class="c cd" style="top:876px"><i class="d">1108</i><i class="s">/</i><i class="u" style="transform:scaleX(0.890);margin-right:-4.10px">FTSCY</i><i class="s">/</i><i class="u" style="transform:scaleX(0.909);margin-right:-1.64px">WS</i><i class="d">950516169001</i>.<i class="d">00</i><i class="u" style="transform:scaleX(0.901);margin-right:-4.10px">BENUA</i><i class="p"> </i><i class="u" style="transform:scaleX(0.890);margin-right:-7.38px">SEJAHTERA</i><i class="p"> </i><i class="u" style="transform:scaleX(0.897);margin-right:-1.64px">KE</i></div>
<div class="c cf" style="top:876px">6.169.001,00</div>
<div class="c cg" style="top:876px"><i class="d">551</i>.<i class="d">430</i>.<i class="d">068</i></div>
<div class="c chh" style="top:876px">1000.03</div>
<div class="c ci" style="top:876px">5000.01</div>
<div class="c cj" style="top:876px">&nbsp;-</div>
<div class="a" style="left:1457px;top:892px;width:227px;height:1px;background:#c8c8c8"></div>
<div class="rh" style="top:893px">1151</div>
<div class="c ca" style="top:893px">989</div>
<div class="c cb" style="top:893px"><i class="u" style="transform:scaleX(0.900);margin-right:-2.46px">BCA</i><i class="s">/</i><i class="u" style="transform:scaleX(0.907);margin-right:-4.10px">WARNA</i><i class="s">/</i><i class="d">25</i><i class="s">/</i><i class="d">1151</i></div>
<div class="c cc" style="top:893px"><i class="d">11</i><i class="s">/</i><i class="d">08</i><i class="s">/</i><i class="d">2025</i></div>
<div class="c cd" style="top:893px"><i class="d">1108</i><i class="s">/</i><i class="u" style="transform:scaleX(0.890);margin-right:-4.10px">FTSCY</i><i class="s">/</i><i class="u" style="transform:scaleX(0.909);margin-right:-1.64px">WS</i><i class="d">950315964000</i>.<i class="d">00</i><i class="u" style="transform:scaleX(0.902);margin-right:-4.10px">NOVAN</i><i class="p"> </i><i class="u" style="transform:scaleX(0.885);margin-right:-2.46px">ADI</i><i class="p"> </i><i class="u" style="transform:scaleX(0.887);margin-right:-6.56px">PRIYATNA</i></div>
<div class="c ce" style="top:893px">5.964.000,00</div>
<div class="c cg" style="top:893px"><i class="d">557</i>.<i class="d">394</i>.<i class="d">068</i></div>
<div class="c chh" style="top:893px">1000.03</div>
<div class="c ci" style="top:893px">2100.02</div>
<div class="c cj" style="top:893px">Novan Adi Priyatna - Hutang Direksi</div>
<div class="a" style="left:1457px;top:909px;width:227px;height:1px;background:#c8c8c8"></div>
<div class="c ck" style="top:893px">Novan Adi Priyatna</div>
<div class="c cl" style="top:893px">Hutang</div>
<div class="a" style="left:1871px;top:909px;width:27px;height:1px;background:#c8c8c8"></div>
<div class="rh" style="top:910px">1152</div>
<div class="c ca" style="top:910px">990</div>
<div class="c cb" style="top:910px"><i class="u" style="transform:scaleX(0.900);margin-right:-2.46px">BCA</i><i class="s">/</i><i class="u" style="transform:scaleX(0.907);margin-right:-4.10px">WARNA</i><i class="s">/</i><i class="d">25</i><i class="s">/</i><i class="d">1152</i></div>
<div class="c cc" style="top:910px"><i class="d">11</i><i class="s">/</i><i class="d">08</i><i class="s">/</i><i class="d">2025</i></div>
<div class="c cd" style="top:910px"><i class="u" style="transform:scaleX(0.868);margin-right:-2.46px">BIF</i><i class="p"> </i><i class="u" style="transform:scaleX(0.893);margin-right:-6.56px">TRANSFER</i><i class="p"> </i><i class="u" style="transform:scaleX(0.902);margin-right:-1.64px">DR</i><i class="p"> </i><i class="d">008</i><i class="u" style="transform:scaleX(0.877);margin-right:-2.46px">IKE</i><i class="p"> </i><i class="u" style="transform:scaleX(0.884);margin-right:-6.56px">NILAWATI</i></div>
<div class="c ce" style="top:910px">550.000,00</div>
<div class="c cg" style="top:910px"><i class="d">557</i>.<i class="d">944</i>.<i class="d">068</i></div>
<div class="c chh" style="top:910px">1000.03</div>
<div class="c ci" style="top:910px">4000.01</div>
<div class="c cj" style="top:910px">&nbsp;-&nbsp;Penjualan</div>
<div class="a" style="left:1457px;top:926px;width:227px;height:1px;background:#c8c8c8"></div>
<div class="c cl" style="top:910px">Penjualan</div>
<div class="a" style="left:1871px;top:926px;width:27px;height:1px;background:#c8c8c8"></div>
<div class="rh" style="top:927px">1153</div>
<div class="c ca" style="top:927px">991</div>
<div class="c cb" style="top:927px"><i class="u" style="transform:scaleX(0.900);margin-right:-2.46px">BCA</i><i class="s">/</i><i class="u" style="transform:scaleX(0.907);margin-right:-4.10px">WARNA</i><i class="s">/</i><i class="d">25</i><i class="s">/</i><i class="d">1153</i></div>
<div class="c cc" style="top:927px"><i class="d">11</i><i class="s">/</i><i class="d">08</i><i class="s">/</i><i class="d">2025</i></div>
<div class="c cd" style="top:927px"><i class="d">1108</i><i class="s">/</i><i class="u" style="transform:scaleX(0.890);margin-right:-4.10px">FTSCY</i><i class="s">/</i><i class="u" style="transform:scaleX(0.909);margin-right:-1.64px">WS</i><i class="d">95051</i><i class="p"> </i><i class="u" style="transform:scaleX(0.896);margin-right:-4.10px">TRFDN</i>-<i class="u" style="transform:scaleX(0.869);margin-right:-4.10px">RIFQI</i><i class="p"> </i><i class="u" style="transform:scaleX(0.903);margin-right:-4.92px">YUNALD</i><i class="p"> </i><i class="u" style="transform:scaleX(0.885);margin-right:-4.10px">ESPAY</i><i class="p"> </i><i class="u" style="transform:scaleX(0.884);margin-right:-4.10px">DEBIT</i><i class="p"> </i><i class="u" style="transform:scaleX(0.893);margin-right:-4.92px">INDONE</i><i class="d">550000</i>.<i class="d">00</i></div>
<div class="c ce" style="top:927px">550.000,00</div>
<div class="c cg" style="top:927px"><i class="d">558</i>.<i class="d">494</i>.<i class="d">068</i></div>
<div class="c chh" style="top:927px">1000.03</div>
<div class="c ci" style="top:927px">4000.01</div>
<div class="c cj" style="top:927px">&nbsp;-&nbsp;Penjualan</div>
<div class="a" style="left:1457px;top:943px;width:227px;height:1px;background:#c8c8c8"></div>
<div class="c cl" style="top:927px">Penjualan</div>
<div class="a" style="left:1871px;top:943px;width:27px;height:1px;background:#c8c8c8"></div>
<div class="rh" style="top:944px">1154</div>
<div class="c ca" style="top:944px">992</div>
<div class="c cb" style="top:944px"><i class="u" style="transform:scaleX(0.900);margin-right:-2.46px">BCA</i><i class="s">/</i><i class="u" style="transform:scaleX(0.907);margin-right:-4.10px">WARNA</i><i class="s">/</i><i class="d">25</i><i class="s">/</i><i class="d">1154</i></div>
<div class="c cc" style="top:944px"><i class="d">11</i><i class="s">/</i><i class="d">08</i><i class="s">/</i><i class="d">2025</i></div>
<div class="c cd" style="top:944px"><i class="d">1108</i><i class="s">/</i><i class="u" style="transform:scaleX(0.890);margin-right:-4.10px">FTSCY</i><i class="s">/</i><i class="u" style="transform:scaleX(0.909);margin-right:-1.64px">WS</i><i class="d">950311875000</i>.<i class="d">00</i><i class="u" style="transform:scaleX(0.911);margin-right:-5.74px">MUHAMAD</i><i class="p"> </i><i class="u" style="transform:scaleX(0.890);margin-right:-5.74px">ARPANDI</i></div>
<div class="c ce" style="top:944px">1.875.000,00</div>
<div class="c cg" style="top:944px"><i class="d">560</i>.<i class="d">369</i>.<i class="d">068</i></div>
<div class="c chh" style="top:944px">1000.03</div>
<div class="c ci" style="top:944px">4000.01</div>
<div class="c cj" style="top:944px">&nbsp;-&nbsp;Penjualan</div>
<div class="a" style="left:1457px;top:960px;width:227px;height:1px;background:#c8c8c8"></div>
<div class="c cl" style="top:944px">Penjualan</div>
<div class="a" style="left:1871px;top:960px;width:27px;height:1px;background:#c8c8c8"></div>
<div class="rh" style="top:961px">1155</div>
<div class="c ca" style="top:961px">993</div>
<div class="c cb" style="top:961px"><i class="u" style="transform:scaleX(0.900);margin-right:-2.46px">BCA</i><i class="s">/</i><i class="u" style="transform:scaleX(0.907);margin-right:-4.10px">WARNA</i><i class="s">/</i><i class="d">25</i><i class="s">/</i><i class="d">1155</i></div>
<div class="c cc" style="top:961px"><i class="d">12</i><i class="s">/</i><i class="d">08</i><i class="s">/</i><i class="d">2025</i></div>
<div class="c cd" style="top:961px"><i class="u" style="transform:scaleX(0.868);margin-right:-2.46px">BIF</i><i class="p"> </i><i class="u" style="transform:scaleX(0.893);margin-right:-6.56px">TRANSFER</i><i class="p"> </i><i class="u" style="transform:scaleX(0.902);margin-right:-1.64px">DR</i><i class="p"> </i><i class="d">013</i><i class="u" style="transform:scaleX(0.905);margin-right:-4.10px">AGUNG</i><i class="p"> </i><i class="u" style="transform:scaleX(0.894);margin-right:-6.56px">PRASETYO</i></div>
<div class="c ce" style="top:961px">732.500,00</div>
<div class="c cg" style="top:961px"><i class="d">561</i>.<i class="d">101</i>.<i class="d">568</i></div>
<div class="c chh" style="top:961px">1000.03</div>
<div class="c ci" style="top:961px">4000.01</div>
<div class="c cj" style="top:961px">Agung Prrasetyo - Penjualan</div>
<div class="a" style="left:1457px;top:977px;width:227px;height:1px;background:#c8c8c8"></div>
<div class="a" style="left:1684px;top:960px;width:1px;height:18px;background:#d0d0d0"></div>
<div class="c ck" style="top:961px">Agung Prrasetyo</div>
<div class="c cl" style="top:961px">Penjualan</div>
<div class="a" style="left:1871px;top:977px;width:27px;height:1px;background:#c8c8c8"></div>
<div class="a" style="left:1870px;top:960px;width:1px;height:18px;background:#d0d0d0"></div>
<div class="a" style="left:0;top:979px;width:32px;height:3px;background:#e6e6e6;border-right:1px solid #9b9b9b"></div>
<div class="a" style="left:31px;top:416px;width:2px;height:51px;background:#217346"></div>
<div class="a" style="left:209px;top:415px;width:91px;height:54px;border:2px solid #217346"></div>
<div class="a" style="left:295px;top:464px;width:7px;height:7px;background:#217346;border:1px solid #fff"></div>
<div class="a" style="left:300px;top:469px;width:34px;height:23px;background:#d5eddc;border:1px solid #a9cdb3"></div>
<svg class="a" style="left:303px;top:472px" width="16" height="15" viewBox="0 0 16 15"><rect x="1" y="1" width="6" height="4" fill="#3a5fcd" stroke="#222" stroke-width="1"/><rect x="7" y="1" width="6" height="4" fill="#fff" stroke="#222" stroke-width="1"/><rect x="1" y="5" width="6" height="4" fill="#fff" stroke="#222" stroke-width="1"/><path d="M1 12.5 H7" stroke="#555" stroke-width="1" stroke-dasharray="1 1"/><path d="M11.5 8.5 V14 M8.8 11.3 H14.2" stroke="#222" stroke-width="1.2"/></svg>
<svg class="a" style="left:324px;top:478px" width="7" height="5" viewBox="0 0 7 5"><path d="M0.5 0.5 H6.5 L3.5 4 Z" fill="#2e6b46"/></svg>
<div class="a" style="left:0px;top:982px;width:1920px;height:28px;background:#e6e6e6"></div>
<div class="a" style="left:0px;top:982px;width:1898px;height:1px;background:#9b9b9b"></div>
<svg class="a" style="left:26px;top:994px;" width="6" height="8" viewBox="0 0 6 8"><path d="M5 0.5 V7.5 L0.5 4 Z" fill="#bdbdbd"/></svg>
<svg class="a" style="left:55px;top:994px;" width="6" height="8" viewBox="0 0 6 8"><path d="M1 0.5 V7.5 L5.5 4 Z" fill="#bdbdbd"/></svg>
<div class="a" style="left:100px;top:987px;width:1px;height:19px;background:#a6a6a6"></div>
<div class="a" style="left:626px;top:987px;width:1px;height:19px;background:#a6a6a6"></div>
<div class="a" style="left:691px;top:987px;width:1px;height:19px;background:#a6a6a6"></div>
<div class="a" style="left:853px;top:987px;width:1px;height:19px;background:#a6a6a6"></div>
<div class="a" style="left:140px;top:982px;width:41px;height:25px;background:#fff;border-left:1px solid #c6c6c6;border-right:1px solid #c6c6c6"></div>
<div class="a" style="left:140px;top:1005px;width:41px;height:2px;background:#217346"></div>
<div class="a" style="left:112.5px;top:990px;font:400 12.5px/12.5px 'Liberation Sans';color:#333;">RK</div>
<div class="a" style="left:152.5px;top:989px;font:700 13px/13px 'Liberation Sans';color:#1e6e42;">rk</div>
<div class="a" style="left:197.5px;top:989px;font:400 12.75px/12.75px 'Liberation Sans';color:#333;">FPK-PT Warna Media Packaging</div>
<div class="a" style="left:418px;top:989px;font:400 12.75px/12.75px 'Liberation Sans';color:#333;">FPM-PT Warna Media Packaging</div>
<div class="a" style="left:639.5px;top:989px;font:400 12.75px/12.75px 'Liberation Sans';color:#333;">Sheet4</div>
<div class="a" style="left:710px;top:989px;font:400 12.75px/12.75px 'Liberation Sans';color:#333;">Bukti Potong Unifikasi</div>
<svg class="a" style="left:888px;top:989px;" width="15" height="15" viewBox="0 0 15 15"><circle cx="7.5" cy="7.5" r="6.5" fill="none" stroke="#555" stroke-width="1.2"/><path d="M7.5 4 V11 M4 7.5 H11" stroke="#555" stroke-width="1.2"/></svg>
<svg class="a" style="left:1151px;top:990px;" width="4" height="14" viewBox="0 0 4 14"><circle cx="2" cy="2" r="0.9" fill="#999"/><circle cx="2" cy="7" r="0.9" fill="#999"/><circle cx="2" cy="12" r="0.9" fill="#999"/></svg>
<div class="a" style="left:1169px;top:989px;width:730px;height:15px;background:#e6e6e6;border:1px solid #bdbdbd"></div>
<div class="a" style="left:1169px;top:989px;width:15px;height:15px;background:#fff;border:1px solid #bdbdbd"></div>
<svg class="a" style="left:1173px;top:992px;" width="6" height="9" viewBox="0 0 6 9"><path d="M5 0.5 V8.5 L0.5 4.5 Z" fill="#222"/></svg>
<div class="a" style="left:1184px;top:989px;width:484px;height:15px;background:#fff;border:1px solid #bdbdbd"></div>
<div class="a" style="left:1884px;top:989px;width:15px;height:15px;background:#fff;border:1px solid #bdbdbd"></div>
<svg class="a" style="left:1889px;top:992px;" width="6" height="9" viewBox="0 0 6 9"><path d="M1 0.5 V8.5 L5.5 4.5 Z" fill="#222"/></svg>
<div class="a" style="left:0px;top:1010px;width:1920px;height:22px;background:#f3f2f1"></div>
<div class="a" style="left:9px;top:1016px;font:400 11px/11px 'Liberation Sans';color:#444;">Ready</div>
<svg class="a" style="left:57px;top:1013px;" width="16" height="16" viewBox="0 0 16 16"><circle cx="7" cy="3" r="2" fill="none" stroke="#444" stroke-width="1"/><path d="M1 6 L13 6 M7 6 V10 L3 15 M7 10 L10 13" fill="none" stroke="#444" stroke-width="1"/><path d="M10 10 L15 15 M15 10 L10 15" stroke="#444" stroke-width="1"/></svg>
<div class="a" style="left:76px;top:1016px;font:400 11.3px/11.3px 'Liberation Sans';color:#444;">Accessibility: Investigate</div>
<div class="a" style="left:1338px;top:1016.5px;font:400 11px/11px 'Liberation Sans';color:#444;">Average: 07/08/2025</div>
<div class="a" style="left:1457px;top:1016.5px;font:400 11px/11px 'Liberation Sans';color:#444;">Count: 3</div>
<div class="a" style="left:1517px;top:1016.5px;font:400 11px/11px 'Liberation Sans';color:#444;">Sum: 22/10/2276</div>
<div class="a" style="left:1620px;top:1010px;width:40px;height:22px;background:#d2d0ce"></div>
<svg class="a" style="left:1632px;top:1014px;" width="15" height="14" viewBox="0 0 15 14"><rect x="0.5" y="0.5" width="14" height="13" fill="none" stroke="#333" stroke-width="1"/><path d="M5.2 0.5 V13.5 M9.8 0.5 V13.5 M0.5 4.8 H14.5 M0.5 9.2 H14.5" stroke="#333" stroke-width="1"/></svg>
<svg class="a" style="left:1672px;top:1014px;" width="15" height="14" viewBox="0 0 15 14"><rect x="0.5" y="0.5" width="14" height="13" fill="none" stroke="#333" stroke-width="1"/><rect x="3.5" y="3.5" width="8" height="7" fill="none" stroke="#333" stroke-width="1"/><path d="M5 5.5 H10 M5 7.5 H10" stroke="#333" stroke-width="0.8"/></svg>
<svg class="a" style="left:1712px;top:1014px;" width="15" height="14" viewBox="0 0 15 14"><rect x="0.5" y="0.5" width="14" height="13" fill="none" stroke="#333" stroke-width="1"/><path d="M6.5 0.5 V7.5 H0.5 M8.5 0.5 V7.5" fill="none" stroke="#333" stroke-width="1"/></svg>
<div class="a" style="left:1746px;top:1020px;width:7px;height:2px;background:#444"></div>
<div class="a" style="left:1760px;top:1020px;width:100px;height:2px;background:#555"></div>
<div class="a" style="left:1808px;top:1016px;width:4px;height:11px;background:#333;border-radius:1px"></div>
<svg class="a" style="left:1863px;top:1016px;" width="9" height="10" viewBox="0 0 9 10"><path d="M4.5 0.5 V9.5 M0.5 5 H8.5" stroke="#444" stroke-width="1.2"/></svg>
<div class="a" style="left:1886px;top:1016.5px;font:400 11px/11px 'Liberation Sans';color:#444;">100%</div>
<div class="a" style="left:0px;top:1032px;width:1920px;height:48px;background:linear-gradient(90deg,#dfe3c2 0%,#e2e4b8 8%,#e6e3ad 23%,#e8e1bc 34%,#eadccd 47%,#e9dccf 57%,#e8ddc8 68%,#eadacf 73%,#e6dfc6 79%,#ebdbd0 83%,#ecd6e1 88.5%,#edd7e3 96%,#ecdccf 100%)"></div>
<div class="a" style="left:0px;top:1032px;width:1920px;height:1px;background:#c9c4be"></div>
<svg class="a" style="left:14px;top:1044px;" width="32" height="22" viewBox="0 0 32 22"><path d="M6 20 Q1 20 1 15.5 Q1 11 6 11 Q7 5 14 5 Q21 5 22 11 Q28 11 28 15.5 Q28 20 23 20 Z" fill="#bcd7f2" stroke="#8ab8e6" stroke-width="1"/></svg>
<div class="a" style="left:30px;top:1038px;width:16px;height:16px;border-radius:8px;background:#c42b1c;color:#fff;font:11px/16px 'Liberation Sans';text-align:center">2</div>
<div class="a" style="left:50px;top:1043px;font:400 12px/12px 'Liberation Sans';color:#222;">26°C</div>
<div class="a" style="left:50px;top:1058px;font:400 12px/12px 'Liberation Sans';color:#555;">Berawan</div>
<svg class="a" style="left:639px;top:1045px;" width="23" height="23" viewBox="0 0 23 23"><rect x="0" y="0" width="11" height="11" fill="#2a9df4"/><rect x="12" y="0" width="11" height="11" fill="#1e90ee"/><rect x="0" y="12" width="11" height="11" fill="#1a86e0"/><rect x="12" y="12" width="11" height="11" fill="#1478d4"/></svg>
<div class="a" style="left:677px;top:1041px;width:216px;height:30px;background:#f6f1ea;border:1px solid #e2dbd0;border-radius:15px"></div>
<svg class="a" style="left:686px;top:1049px;" width="15" height="15" viewBox="0 0 15 15"><circle cx="6" cy="6" r="5" fill="none" stroke="#222" stroke-width="1.6"/><path d="M9.5 9.5 L14 14" stroke="#222" stroke-width="1.8"/></svg>
<div class="a" style="left:712.5px;top:1051px;font:400 12px/12px 'Liberation Sans';color:#555;">Search</div>
<svg class="a" style="left:846px;top:1045px;" width="42" height="24" viewBox="0 0 42 24"><ellipse cx="23" cy="21" rx="18" ry="2.5" fill="#e6c9a0"/><path d="M6 5 L12 2 L15 7 L32 8 L35 16 L33 21 L31 21 L30 15 L16 14 L15 21 L13 21 L12 13 Q9 9 6 8 Z" fill="#f4f4f8" stroke="#444466" stroke-width="1"/><path d="M17 8 L16 14 M21 8 L20 14 M25 8 L25 14 M29 9 L29 15" stroke="#333355" stroke-width="1.3"/></svg>
<svg class="a" style="left:906px;top:1045px;" width="25" height="23" viewBox="0 0 25 23"><rect x="10" y="1" width="14" height="14" fill="#f4f4f4" stroke="#ddd"/><rect x="1" y="9" width="15" height="13" fill="#222"/><rect x="7" y="6" width="11" height="10" fill="#bdbdbd"/></svg>
<svg class="a" style="left:949px;top:1043px;" width="27" height="24" viewBox="0 0 27 24"><defs><linearGradient id="cpa" x1="0" y1="0" x2="1" y2="1"><stop offset="0" stop-color="#2a7de1"/><stop offset="0.5" stop-color="#3fc37c"/><stop offset="1" stop-color="#f0a030"/></linearGradient><linearGradient id="cpb" x1="0" y1="0" x2="1" y2="1"><stop offset="0" stop-color="#6a4de0"/><stop offset="0.6" stop-color="#e04fc0"/><stop offset="1" stop-color="#f06a40"/></linearGradient></defs><path d="M8 3 Q10 1 13 1 H18 Q21 1 19 5 L13 19 Q11 23 7 23 H5 Q1 23 2 19 Z" fill="url(#cpa)"/><path d="M19 1 Q16 1 14 5 L8 19 Q6 23 10 23 H15 Q18 23 20 19 L25 7 Q26 3 22 2 Z" fill="url(#cpb)" opacity="0.92"/></svg>
<svg class="a" style="left:993px;top:1044px;" width="27" height="24" viewBox="0 0 27 24"><path d="M1 3 Q1 1 3 1 H10 Q12 1 13 3 L14 4 H24 Q26 4 26 6 V21 Q26 23 24 23 H3 Q1 23 1 21 Z" fill="#e0a820"/><rect x="1" y="6" width="25" height="17" rx="2" fill="#fcd34d"/><rect x="7" y="15" width="14" height="8" rx="1" fill="#1f7ad0"/></svg>
<div class="a" style="left:1005px;top:1073px;width:5px;height:2px;background:#777;border-radius:1px"></div>
<svg class="a" style="left:1038px;top:1043px;" width="26" height="26" viewBox="0 0 26 26"><defs><linearGradient id="edg" x1="0" y1="0" x2="1" y2="0.3"><stop offset="0" stop-color="#1a8ae0"/><stop offset="0.55" stop-color="#20b6d8"/><stop offset="1" stop-color="#52d06a"/></linearGradient></defs><circle cx="13" cy="13" r="12" fill="url(#edg)"/><path d="M3 17 Q6 24 13 25 Q21 25 24 18 Q20 22 15 21 Q10 20 10 15 Q10 12 13 11 Q8 10 5 13 Z" fill="#134f9c"/><path d="M10 15 Q10 11 14 11 Q18 11 19 15 Z" fill="#eaf4fb"/><circle cx="8" cy="20" r="3.2" fill="#8a8f95"/></svg>
<svg class="a" style="left:1082px;top:1044px;" width="25" height="25" viewBox="0 0 25 25"><path d="M8 5 V3 Q8 1 10 1 H15 Q17 1 17 3 V5" fill="none" stroke="#39c0e0" stroke-width="2"/><path d="M1 5 H24 V20 Q24 24 20 24 H5 Q1 24 1 20 Z" fill="#1b4f9e"/><rect x="7" y="9" width="5" height="5" fill="#f25022"/><rect x="13" y="9" width="5" height="5" fill="#7fba00"/><rect x="7" y="15" width="5" height="5" fill="#00a4ef"/><rect x="13" y="15" width="5" height="5" fill="#ffb900"/></svg>
<svg class="a" style="left:1127px;top:1044px;" width="25" height="25" viewBox="0 0 25 25"><circle cx="12.5" cy="12.5" r="12" fill="#e03a4a"/><path d="M7 19 L12.5 6 L18 19" fill="none" stroke="#fff" stroke-width="2.2"/></svg>
<div class="a" style="left:1137px;top:1073px;width:5px;height:2px;background:#777;border-radius:1px"></div>
<svg class="a" style="left:1169px;top:1038px;" width="30" height="30" viewBox="0 0 30 30"><path d="M14 29 A12 12 0 1 0 4 24 L2 29 Z" fill="none" stroke="#25a35a" stroke-width="2.3"/><path d="M9 13 Q9 20 17 22 L19 20 L16 18 L14 19 Q12 17 11 15 L12 13 L10 10 Z" fill="#25a35a"/><circle cx="23" cy="9" r="8" fill="#1a6fd6"/><text x="23" y="13" text-anchor="middle" font-family="Liberation Sans" font-size="11" fill="#fff">7</text></svg>
<svg class="a" style="left:1215px;top:1047px;" width="25" height="19" viewBox="0 0 25 19"><rect x="0" y="0" width="25" height="19" rx="2" fill="#2c2c2c"/><rect x="0" y="0" width="25" height="3" fill="#555"/><path d="M5 7 L9 10 L5 13" fill="none" stroke="#fff" stroke-width="1.5"/><path d="M11 14 H17" stroke="#fff" stroke-width="1.5"/></svg>
<div class="a" style="left:1225px;top:1073px;width:5px;height:2px;background:#777;border-radius:1px"></div>
<div class="a" style="left:1252px;top:1037px;width:38px;height:38px;background:#f2ece4;border-radius:4px"></div>
<svg class="a" style="left:1258px;top:1044px;" width="26" height="23" viewBox="0 0 26 23"><rect x="6" y="0" width="20" height="23" rx="2" fill="#21a366"/><rect x="6" y="6" width="20" height="6" fill="#107c41"/><rect x="6" y="12" width="20" height="6" fill="#185c37"/><rect x="0" y="5" width="13" height="13" rx="1.5" fill="#107c41"/><path d="M3.5 8 L9.5 15 M9.5 8 L3.5 15" stroke="#fff" stroke-width="1.6"/></svg>
<div class="a" style="left:1263px;top:1072px;width:16px;height:3px;background:#1a73d6;border-radius:2px"></div>
<svg class="a" style="left:1752px;top:1051px;" width="12" height="8" viewBox="0 0 12 8"><path d="M1 7 L6 2 L11 7" fill="none" stroke="#222" stroke-width="1.3"/></svg>
<svg class="a" style="left:1782px;top:1047px;" width="17" height="17" viewBox="0 0 17 17"><rect x="0.5" y="1.5" width="11" height="9" fill="none" stroke="#222" stroke-width="1.1"/><path d="M3 13.5 H10 M6 10.5 V13.5" stroke="#222" stroke-width="1.1"/><rect x="12.5" y="0.5" width="3" height="4" rx="1" fill="none" stroke="#222" stroke-width="1"/><path d="M14 4.5 V15" stroke="#222" stroke-width="1.1"/></svg>
<svg class="a" style="left:1805px;top:1049px;" width="18" height="14" viewBox="0 0 18 14"><path d="M1 5 H4 L8 1.5 V12.5 L4 9 H1 Z" fill="none" stroke="#222" stroke-width="1.1"/><path d="M10.5 4.5 Q12 7 10.5 9.5 M12.5 2.5 Q15 7 12.5 11.5 M14.5 1 Q18 7 14.5 13" fill="none" stroke="#222" stroke-width="1.1"/></svg>
<div class="a" style="right:20px;top:1042px;font:400 12px/12px 'Liberation Sans';color:#222;">10:07</div>
<div class="a" style="right:20px;top:1057.5px;font:400 12px/12px 'Liberation Sans';color:#222;">31/01/2026</div>
</body></html>
